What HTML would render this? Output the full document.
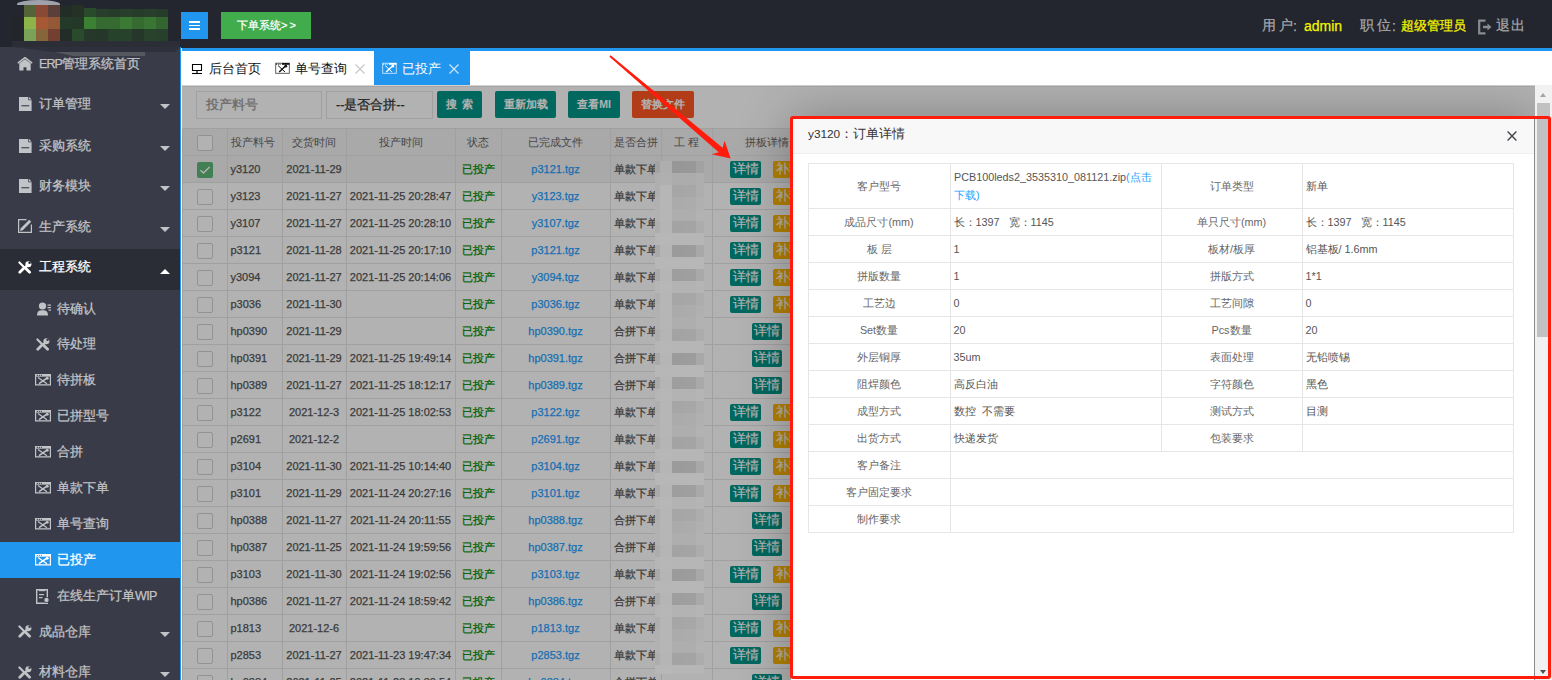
<!DOCTYPE html><html><head><meta charset="utf-8"><style>
*{box-sizing:border-box;margin:0;padding:0}
html,body{width:1552px;height:680px;overflow:hidden;background:#fff;font-family:"Liberation Sans",sans-serif;position:relative}
div,span,svg{position:absolute}
span.c,span.n{position:static}
.txt{white-space:nowrap;-webkit-text-stroke:0.25px currentColor}
</style></head><body>
<div style="left:0;top:0;width:1552px;height:48px;background:#23262e"></div>
<div style="left:17px;top:0;width:43px;height:5px;background:#9fa2aa;border-radius:60% 60% 0 0/100% 100% 0 0"></div>
<div style="left:12px;top:17px;width:12px;height:24px;background:#22262b"></div>
<div style="left:24px;top:5px;width:12px;height:12px;background:#546338"></div>
<div style="left:36px;top:5px;width:12px;height:12px;background:#8a4934"></div>
<div style="left:48px;top:5px;width:12px;height:12px;background:#5c3f38"></div>
<div style="left:60px;top:5px;width:12px;height:12px;background:#232d28"></div>
<div style="left:72px;top:5px;width:12px;height:12px;background:#243226"></div>
<div style="left:84px;top:8px;width:12px;height:9px;background:#2a4a2c"></div>
<div style="left:96px;top:9px;width:12px;height:8px;background:#28402b"></div>
<div style="left:108px;top:9px;width:12px;height:8px;background:#263c2a"></div>
<div style="left:120px;top:9px;width:12px;height:8px;background:#28402b"></div>
<div style="left:132px;top:9px;width:12px;height:8px;background:#263c2a"></div>
<div style="left:144px;top:9px;width:12px;height:8px;background:#28402b"></div>
<div style="left:156px;top:9px;width:12px;height:8px;background:#263c2a"></div>
<div style="left:24px;top:17px;width:12px;height:12px;background:#8db34b"></div>
<div style="left:36px;top:17px;width:12px;height:12px;background:#a65734"></div>
<div style="left:48px;top:17px;width:12px;height:12px;background:#955837"></div>
<div style="left:60px;top:17px;width:12px;height:12px;background:#243a29"></div>
<div style="left:72px;top:17px;width:12px;height:12px;background:#243827"></div>
<div style="left:84px;top:17px;width:12px;height:12px;background:#3c8133"></div>
<div style="left:96px;top:17px;width:12px;height:12px;background:#356a30"></div>
<div style="left:108px;top:17px;width:12px;height:12px;background:#356a30"></div>
<div style="left:120px;top:17px;width:12px;height:12px;background:#3b7a33"></div>
<div style="left:132px;top:17px;width:12px;height:12px;background:#356a31"></div>
<div style="left:144px;top:17px;width:12px;height:12px;background:#3a7633"></div>
<div style="left:156px;top:17px;width:12px;height:12px;background:#346530"></div>
<div style="left:24px;top:29px;width:12px;height:12px;background:#7aa357"></div>
<div style="left:36px;top:29px;width:12px;height:12px;background:#87643a"></div>
<div style="left:48px;top:29px;width:12px;height:12px;background:#733f30"></div>
<div style="left:60px;top:29px;width:12px;height:12px;background:#232d28"></div>
<div style="left:72px;top:29px;width:12px;height:12px;background:#2a4a2c"></div>
<div style="left:84px;top:29px;width:12px;height:12px;background:#26382a"></div>
<div style="left:96px;top:29px;width:12px;height:12px;background:#243728"></div>
<div style="left:108px;top:29px;width:12px;height:12px;background:#27422b"></div>
<div style="left:120px;top:29px;width:12px;height:12px;background:#27422b"></div>
<div style="left:132px;top:29px;width:12px;height:12px;background:#243728"></div>
<div style="left:144px;top:29px;width:12px;height:12px;background:#28432c"></div>
<div style="left:156px;top:29px;width:12px;height:12px;background:#26402b"></div>
<div style="left:12px;top:41px;width:168px;height:6px;background:#2b2e37"></div>
<div style="left:181px;top:12px;width:27px;height:27px;background:#2196ee"></div>
<div style="left:189px;top:21px;width:11px;height:1.6px;background:#fff"></div>
<div style="left:189px;top:24.5px;width:11px;height:1.6px;background:#fff"></div>
<div style="left:189px;top:28px;width:11px;height:1.6px;background:#fff"></div>
<div class="txt" style="left:221px;top:12px;width:90px;height:27px;background:#41ac4c;color:#fff;font-size:11px;line-height:27px;text-align:center;padding-left:1px"><span class="c" style="font-size:11.2px">下单系统</span>&gt;<span class="n" style="margin-left:2px">&gt;</span></div>
<div class="txt" style="left:1262px;top:18px;height:16px;line-height:16px;font-size:13.5px;color:#a6a7ab;letter-spacing:2.5px"><span class="c" style="font-size:13.5px">用户</span></div>
<div class="txt" style="left:1293px;top:18px;height:16px;line-height:16px;font-size:14px;color:#a6a7ab;letter-spacing:0px">:</div>
<div class="txt" style="left:1304px;top:18px;height:16px;line-height:16px;font-size:14px;color:#f5f500;letter-spacing:0px">admin</div>
<div class="txt" style="left:1360px;top:18px;height:16px;line-height:16px;font-size:13.5px;color:#a6a7ab;letter-spacing:3px"><span class="c" style="font-size:13.5px">职位</span></div>
<div class="txt" style="left:1392px;top:18px;height:16px;line-height:16px;font-size:14px;color:#a6a7ab;letter-spacing:0px">:</div>
<div class="txt" style="left:1401px;top:18px;height:16px;line-height:16px;font-size:13.5px;color:#f5f500;letter-spacing:0px"><span class="c" style="font-size:13px">超级管理员</span></div>
<svg style="left:1477px;top:18.5px" width="16" height="16" viewBox="0 0 16 16"><path d="M8.5 1.6H2.2v12.8H8.5" fill="none" stroke="#8a8b8f" stroke-width="2.2"/><path d="M6 8h6" stroke="#8a8b8f" stroke-width="2.5"/><path d="M10.5 4.5L14.5 8L10.5 11.5z" fill="#8a8b8f"/></svg>
<div class="txt" style="left:1496px;top:18px;height:16px;line-height:16px;font-size:13.5px;color:#a6a7ab;letter-spacing:0px"><span class="c" style="font-size:13.5px">退</span></div>
<div class="txt" style="left:1511px;top:18px;height:16px;line-height:16px;font-size:13.5px;color:#a6a7ab;letter-spacing:0px"><span class="c" style="font-size:13.5px">出</span></div>
<div style="left:0;top:47px;width:180px;height:633px;background:#393c48"></div>
<div style="left:12px;top:47px;width:168px;height:5px;background:#2e313b;clip-path:polygon(0 0,100% 0,97% 100%,25% 100%)"></div>
<div style="left:55px;top:52px;width:90px;height:4px;background:#55585f;clip-path:polygon(0 0,100% 0,100% 100%,20% 100%)"></div>
<div style="left:17px;top:57px;width:16px;height:16px"><svg width="16" height="14" viewBox="0 0 16 14"><path d="M0.8 6.2L8 0.6L15.2 6.2" fill="none" stroke="#c2c3c7" stroke-width="1.5"/><path d="M2.3 6.2L8 2.2L13.7 6.2V13.4H9.5V10.3H6.5V13.4H2.3Z" fill="#c2c3c7"/></svg></div>
<div class="txt" style="left:39px;top:56px;height:16px;line-height:16px;font-size:12.5px;color:#c2c3c7"><span class="n" style="letter-spacing:-0.9px">ERP</span><span class="c" style="font-size:12.5px">管理系统首页</span></div>
<div style="left:19px;top:97px;width:16px;height:16px"><svg width="13" height="14" viewBox="0 0 13 14"><path d="M0 0H9.3V3.2H12.6V14H0Z" fill="#c2c3c7"/><path d="M10 0L12.6 2.6H10Z" fill="#c2c3c7"/><rect x="2.4" y="8.2" width="7.8" height="1.1" fill="#393c48"/></svg></div>
<div class="txt" style="left:39px;top:96px;height:16px;line-height:16px;font-size:12.5px;color:#c2c3c7"><span class="c" style="font-size:12.5px">订单管理</span></div>
<div style="left:160px;top:104.4px;width:0;height:0;border-left:5.5px solid transparent;border-right:5.5px solid transparent;border-top:5.5px solid #c2c3c7"></div>
<div style="left:19px;top:138.5px;width:16px;height:16px"><svg width="13" height="14" viewBox="0 0 13 14"><path d="M0 0H9.3V3.2H12.6V14H0Z" fill="#c2c3c7"/><path d="M10 0L12.6 2.6H10Z" fill="#c2c3c7"/><rect x="2.4" y="8.2" width="7.8" height="1.1" fill="#393c48"/></svg></div>
<div class="txt" style="left:39px;top:137.5px;height:16px;line-height:16px;font-size:12.5px;color:#c2c3c7"><span class="c" style="font-size:12.5px">采购系统</span></div>
<div style="left:160px;top:145.9px;width:0;height:0;border-left:5.5px solid transparent;border-right:5.5px solid transparent;border-top:5.5px solid #c2c3c7"></div>
<div style="left:19px;top:179px;width:16px;height:16px"><svg width="13" height="14" viewBox="0 0 13 14"><path d="M0 0H9.3V3.2H12.6V14H0Z" fill="#c2c3c7"/><path d="M10 0L12.6 2.6H10Z" fill="#c2c3c7"/><rect x="2.4" y="8.2" width="7.8" height="1.1" fill="#393c48"/></svg></div>
<div class="txt" style="left:39px;top:178px;height:16px;line-height:16px;font-size:12.5px;color:#c2c3c7"><span class="c" style="font-size:12.5px">财务模块</span></div>
<div style="left:160px;top:186.4px;width:0;height:0;border-left:5.5px solid transparent;border-right:5.5px solid transparent;border-top:5.5px solid #c2c3c7"></div>
<div style="left:18px;top:219.0px;width:16px;height:16px"><svg width="14" height="14" viewBox="0 0 14 14"><path d="M8.5 0.6H0.6V13.4H13.4V5.5" fill="none" stroke="#c2c3c7" stroke-width="1.2"/><path d="M2 12L2.8 9.2L11.2 0.8L13.2 2.8L4.8 11.2Z" fill="#c2c3c7"/></svg></div>
<div class="txt" style="left:39px;top:218.5px;height:16px;line-height:16px;font-size:12.5px;color:#c2c3c7"><span class="c" style="font-size:12.5px">生产系统</span></div>
<div style="left:160px;top:226.9px;width:0;height:0;border-left:5.5px solid transparent;border-right:5.5px solid transparent;border-top:5.5px solid #c2c3c7"></div>
<div style="left:0;top:249px;width:180px;height:40.5px;background:#2a2d35"></div>
<div style="left:18px;top:260.5px;width:16px;height:16px"><svg width="14" height="13" viewBox="0 0 14 13"><path d="M1.4 1.4L6.2 6.2" stroke="#fff" stroke-width="2.1" stroke-linecap="round"/><path d="M6 7L1.8 11.2" stroke="#fff" stroke-width="2.8" stroke-linecap="round"/><path d="M6.8 6.4L11.6 11.2" stroke="#fff" stroke-width="2.8" stroke-linecap="round"/><circle cx="10.4" cy="3.2" r="3" fill="#fff"/><circle cx="11.6" cy="1.8" r="1.3" fill="#2a2d35"/><path d="M9.2 4.6L6.4 7.4" stroke="#fff" stroke-width="2.4"/></svg></div>
<div class="txt" style="left:39px;top:259px;height:16px;line-height:16px;font-size:12.5px;color:#fff"><span class="c" style="font-size:12.5px">工程系统</span></div>
<div style="left:160px;top:268.5px;width:0;height:0;border-left:5.5px solid transparent;border-right:5.5px solid transparent;border-bottom:5.5px solid #fff"></div>
<div style="left:37px;top:301.5px;width:16px;height:16px"><svg width="15" height="14" viewBox="0 0 15 14"><circle cx="5.5" cy="4" r="3.6" fill="#c2c3c7"/><path d="M0 13.6C0 9.3 2 8.2 5.5 8.2S11 9.3 11 13.6Z" fill="#c2c3c7"/><rect x="10.5" y="2.5" width="3.5" height="1.2" fill="#c2c3c7"/><rect x="10.5" y="5" width="3.5" height="1.2" fill="#c2c3c7"/><rect x="11.5" y="7.5" width="2.5" height="1.2" fill="#c2c3c7"/></svg></div>
<div class="txt" style="left:57px;top:300.5px;height:16px;line-height:16px;font-size:12.5px;color:#c2c3c7"><span class="c" style="font-size:12.5px">待确认</span></div>
<div style="left:36px;top:337.95px;width:16px;height:16px"><svg width="14" height="13" viewBox="0 0 14 13"><path d="M1.4 1.4L6.2 6.2" stroke="#c2c3c7" stroke-width="2.1" stroke-linecap="round"/><path d="M6 7L1.8 11.2" stroke="#c2c3c7" stroke-width="2.8" stroke-linecap="round"/><path d="M6.8 6.4L11.6 11.2" stroke="#c2c3c7" stroke-width="2.8" stroke-linecap="round"/><circle cx="10.4" cy="3.2" r="3" fill="#c2c3c7"/><circle cx="11.6" cy="1.8" r="1.3" fill="#393c48"/><path d="M9.2 4.6L6.4 7.4" stroke="#c2c3c7" stroke-width="2.4"/></svg></div>
<div class="txt" style="left:57px;top:336.45px;height:16px;line-height:16px;font-size:12.5px;color:#c2c3c7"><span class="c" style="font-size:12.5px">待处理</span></div>
<div style="left:35px;top:374.4px;width:16px;height:16px"><svg width="16" height="11.4" viewBox="0 0 16 12" preserveAspectRatio="none"><path d="M0.6 0.6H15.4V11.4H0.6Z" fill="none" stroke="#c2c3c7" stroke-width="1.2"/><rect x="0" y="0" width="16" height="2.8" fill="#c2c3c7"/><rect x="1.8" y="0.9" width="1.1" height="1.1" fill="#393c48"/><rect x="3.8" y="0.9" width="1.1" height="1.1" fill="#393c48"/><rect x="5.8" y="0.9" width="1.1" height="1.1" fill="#393c48"/><path d="M3 3.8L12 10.2" stroke="#c2c3c7" stroke-width="1.3"/><path d="M12.6 3.8L4 10.2" stroke="#c2c3c7" stroke-width="1.5"/><circle cx="12.2" cy="4.6" r="1.5" fill="#c2c3c7"/></svg></div>
<div class="txt" style="left:57px;top:372.4px;height:16px;line-height:16px;font-size:12.5px;color:#c2c3c7"><span class="c" style="font-size:12.5px">待拼板</span></div>
<div style="left:35px;top:410.35px;width:16px;height:16px"><svg width="16" height="11.4" viewBox="0 0 16 12" preserveAspectRatio="none"><path d="M0.6 0.6H15.4V11.4H0.6Z" fill="none" stroke="#c2c3c7" stroke-width="1.2"/><rect x="0" y="0" width="16" height="2.8" fill="#c2c3c7"/><rect x="1.8" y="0.9" width="1.1" height="1.1" fill="#393c48"/><rect x="3.8" y="0.9" width="1.1" height="1.1" fill="#393c48"/><rect x="5.8" y="0.9" width="1.1" height="1.1" fill="#393c48"/><path d="M3 3.8L12 10.2" stroke="#c2c3c7" stroke-width="1.3"/><path d="M12.6 3.8L4 10.2" stroke="#c2c3c7" stroke-width="1.5"/><circle cx="12.2" cy="4.6" r="1.5" fill="#c2c3c7"/></svg></div>
<div class="txt" style="left:57px;top:408.35px;height:16px;line-height:16px;font-size:12.5px;color:#c2c3c7"><span class="c" style="font-size:12.5px">已拼型号</span></div>
<div style="left:35px;top:446.3px;width:16px;height:16px"><svg width="16" height="11.4" viewBox="0 0 16 12" preserveAspectRatio="none"><path d="M0.6 0.6H15.4V11.4H0.6Z" fill="none" stroke="#c2c3c7" stroke-width="1.2"/><rect x="0" y="0" width="16" height="2.8" fill="#c2c3c7"/><rect x="1.8" y="0.9" width="1.1" height="1.1" fill="#393c48"/><rect x="3.8" y="0.9" width="1.1" height="1.1" fill="#393c48"/><rect x="5.8" y="0.9" width="1.1" height="1.1" fill="#393c48"/><path d="M3 3.8L12 10.2" stroke="#c2c3c7" stroke-width="1.3"/><path d="M12.6 3.8L4 10.2" stroke="#c2c3c7" stroke-width="1.5"/><circle cx="12.2" cy="4.6" r="1.5" fill="#c2c3c7"/></svg></div>
<div class="txt" style="left:57px;top:444.3px;height:16px;line-height:16px;font-size:12.5px;color:#c2c3c7"><span class="c" style="font-size:12.5px">合拼</span></div>
<div style="left:35px;top:482.25px;width:16px;height:16px"><svg width="16" height="11.4" viewBox="0 0 16 12" preserveAspectRatio="none"><path d="M0.6 0.6H15.4V11.4H0.6Z" fill="none" stroke="#c2c3c7" stroke-width="1.2"/><rect x="0" y="0" width="16" height="2.8" fill="#c2c3c7"/><rect x="1.8" y="0.9" width="1.1" height="1.1" fill="#393c48"/><rect x="3.8" y="0.9" width="1.1" height="1.1" fill="#393c48"/><rect x="5.8" y="0.9" width="1.1" height="1.1" fill="#393c48"/><path d="M3 3.8L12 10.2" stroke="#c2c3c7" stroke-width="1.3"/><path d="M12.6 3.8L4 10.2" stroke="#c2c3c7" stroke-width="1.5"/><circle cx="12.2" cy="4.6" r="1.5" fill="#c2c3c7"/></svg></div>
<div class="txt" style="left:57px;top:480.25px;height:16px;line-height:16px;font-size:12.5px;color:#c2c3c7"><span class="c" style="font-size:12.5px">单款下单</span></div>
<div style="left:35px;top:518.2px;width:16px;height:16px"><svg width="16" height="11.4" viewBox="0 0 16 12" preserveAspectRatio="none"><path d="M0.6 0.6H15.4V11.4H0.6Z" fill="none" stroke="#c2c3c7" stroke-width="1.2"/><rect x="0" y="0" width="16" height="2.8" fill="#c2c3c7"/><rect x="1.8" y="0.9" width="1.1" height="1.1" fill="#393c48"/><rect x="3.8" y="0.9" width="1.1" height="1.1" fill="#393c48"/><rect x="5.8" y="0.9" width="1.1" height="1.1" fill="#393c48"/><path d="M3 3.8L12 10.2" stroke="#c2c3c7" stroke-width="1.3"/><path d="M12.6 3.8L4 10.2" stroke="#c2c3c7" stroke-width="1.5"/><circle cx="12.2" cy="4.6" r="1.5" fill="#c2c3c7"/></svg></div>
<div class="txt" style="left:57px;top:516.2px;height:16px;line-height:16px;font-size:12.5px;color:#c2c3c7"><span class="c" style="font-size:12.5px">单号查询</span></div>
<div style="left:0;top:542px;width:180px;height:36px;background:#2196ee"></div>
<div style="left:35px;top:554.1500000000001px;width:16px;height:16px"><svg width="16" height="11.4" viewBox="0 0 16 12" preserveAspectRatio="none"><path d="M0.6 0.6H15.4V11.4H0.6Z" fill="none" stroke="#fff" stroke-width="1.2"/><rect x="0" y="0" width="16" height="2.8" fill="#fff"/><rect x="1.8" y="0.9" width="1.1" height="1.1" fill="#2196ee"/><rect x="3.8" y="0.9" width="1.1" height="1.1" fill="#2196ee"/><rect x="5.8" y="0.9" width="1.1" height="1.1" fill="#2196ee"/><path d="M3 3.8L12 10.2" stroke="#fff" stroke-width="1.3"/><path d="M12.6 3.8L4 10.2" stroke="#fff" stroke-width="1.5"/><circle cx="12.2" cy="4.6" r="1.5" fill="#fff"/></svg></div>
<div class="txt" style="left:57px;top:552.1500000000001px;height:16px;line-height:16px;font-size:12.5px;color:#fff"><span class="c" style="font-size:12.5px">已投产</span></div>
<div style="left:36px;top:589.1px;width:16px;height:16px"><svg width="15" height="15" viewBox="0 0 15 15"><path d="M0.7 0.7H11.3V14.3H0.7Z" fill="none" stroke="#c2c3c7" stroke-width="1.4"/><rect x="3" y="0" width="6" height="2.2" fill="#c2c3c7"/><rect x="3" y="5" width="5" height="1.2" fill="#c2c3c7"/><rect x="3" y="8" width="3.5" height="1.2" fill="#c2c3c7"/><circle cx="10.5" cy="11" r="3" fill="#393c48"/><circle cx="10.5" cy="11" r="2.2" fill="#c2c3c7"/></svg></div>
<div class="txt" style="left:57px;top:588.1px;height:16px;line-height:16px;font-size:12.5px;color:#c2c3c7"><span class="c" style="font-size:12.5px">在线生产订单</span><span class="n" style="letter-spacing:-0.6px">WIP</span></div>
<div style="left:18px;top:625.0px;width:16px;height:16px"><svg width="14" height="13" viewBox="0 0 14 13"><path d="M1.4 1.4L6.2 6.2" stroke="#c2c3c7" stroke-width="2.1" stroke-linecap="round"/><path d="M6 7L1.8 11.2" stroke="#c2c3c7" stroke-width="2.8" stroke-linecap="round"/><path d="M6.8 6.4L11.6 11.2" stroke="#c2c3c7" stroke-width="2.8" stroke-linecap="round"/><circle cx="10.4" cy="3.2" r="3" fill="#c2c3c7"/><circle cx="11.6" cy="1.8" r="1.3" fill="#393c48"/><path d="M9.2 4.6L6.4 7.4" stroke="#c2c3c7" stroke-width="2.4"/></svg></div>
<div class="txt" style="left:39px;top:623.5px;height:16px;line-height:16px;font-size:12.5px;color:#c2c3c7"><span class="c" style="font-size:12.5px">成品仓库</span></div>
<div style="left:160px;top:631.9px;width:0;height:0;border-left:5.5px solid transparent;border-right:5.5px solid transparent;border-top:5.5px solid #c2c3c7"></div>
<div style="left:18px;top:665.5px;width:16px;height:16px"><svg width="14" height="13" viewBox="0 0 14 13"><path d="M1.4 1.4L6.2 6.2" stroke="#c2c3c7" stroke-width="2.1" stroke-linecap="round"/><path d="M6 7L1.8 11.2" stroke="#c2c3c7" stroke-width="2.8" stroke-linecap="round"/><path d="M6.8 6.4L11.6 11.2" stroke="#c2c3c7" stroke-width="2.8" stroke-linecap="round"/><circle cx="10.4" cy="3.2" r="3" fill="#c2c3c7"/><circle cx="11.6" cy="1.8" r="1.3" fill="#393c48"/><path d="M9.2 4.6L6.4 7.4" stroke="#c2c3c7" stroke-width="2.4"/></svg></div>
<div class="txt" style="left:39px;top:664px;height:16px;line-height:16px;font-size:12.5px;color:#c2c3c7"><span class="c" style="font-size:12.5px">材料仓库</span></div>
<div style="left:160px;top:672.4px;width:0;height:0;border-left:5.5px solid transparent;border-right:5.5px solid transparent;border-top:5.5px solid #c2c3c7"></div>
<div style="left:180px;top:47px;width:1px;height:633px;background:#2196ee"></div>
<div style="left:182px;top:48px;width:1370px;height:3px;background:#2196ee"></div>
<div style="left:181px;top:51px;width:1371px;height:34px;background:#fff"></div>
<div style="left:374px;top:51px;width:96px;height:34px;background:#2196ee"></div>
<svg style="left:191px;top:63px" width="12" height="12" viewBox="0 0 12 12"><path d="M1.5 1.5H10.5V7.5H1.5Z" fill="none" stroke="#000" stroke-width="1.1"/><path d="M6 7.5V10" stroke="#000" stroke-width="1.2"/><path d="M1 10.5H11" stroke="#000" stroke-width="1.1"/></svg>
<div class="txt" style="left:209px;top:60.5px;height:16px;line-height:16px;font-size:13px;-webkit-text-stroke:0;color:#111"><span class="c" style="font-size:12.8px">后台首页</span></div>
<svg style="left:275px;top:62px" width="15" height="12" viewBox="0 0 15 12"><rect x="0.7" y="1.2" width="13.6" height="10.1" fill="none" stroke="#111" stroke-width="0.9" opacity="0.75"/><path d="M7 1H14.5V2.8H7Z" fill="#111"/><path d="M1 2.2H6.5" stroke="#111" stroke-width="1" stroke-dasharray="1 0.8"/><path d="M3 3.5L10 10" stroke="#111" stroke-width="1"/><path d="M4.2 10L10.2 4.2" stroke="#111" stroke-width="1.5"/><circle cx="10.8" cy="4.2" r="1.4" fill="#111"/></svg>
<div class="txt" style="left:295px;top:60.5px;height:16px;line-height:16px;font-size:13px;-webkit-text-stroke:0;color:#111"><span class="c" style="font-size:12.8px">单号查询</span></div>
<svg style="left:354.5px;top:64px" width="10" height="10" viewBox="0 0 10 10"><path d="M0.5 0.5L9.5 9.5M9.5 0.5L0.5 9.5" stroke="#c8c8c8" stroke-width="1.2"/></svg>
<svg style="left:382px;top:62px" width="15" height="12" viewBox="0 0 15 12"><rect x="0.7" y="1.2" width="13.6" height="10.1" fill="none" stroke="#fff" stroke-width="0.9" opacity="0.75"/><path d="M7 1H14.5V2.8H7Z" fill="#fff"/><path d="M1 2.2H6.5" stroke="#fff" stroke-width="1" stroke-dasharray="1 0.8"/><path d="M3 3.5L10 10" stroke="#fff" stroke-width="1"/><path d="M4.2 10L10.2 4.2" stroke="#fff" stroke-width="1.5"/><circle cx="10.8" cy="4.2" r="1.4" fill="#fff"/></svg>
<div class="txt" style="left:402px;top:60.5px;height:16px;line-height:16px;font-size:13px;-webkit-text-stroke:0;color:#fff"><span class="c" style="font-size:12.8px">已投产</span></div>
<svg style="left:449px;top:64px" width="10" height="10" viewBox="0 0 10 10"><path d="M0.5 0.5L9.5 9.5M9.5 0.5L0.5 9.5" stroke="#cfe6fb" stroke-width="1.2"/></svg>
<div style="left:182px;top:85px;width:1353px;height:595px;background:#fff"></div>
<div class="txt" style="left:196px;top:91px;width:126px;height:28px;border:1px solid #e6e6e6;background:#fff;color:#999;font-size:12.5px;line-height:26px;padding-left:9px"><span class="c" style="font-size:12.6px">投产料号</span></div>
<div class="txt" style="left:326px;top:91px;width:107px;height:28px;border:1px solid #e6e6e6;background:#fff;color:#333;font-size:12.5px;line-height:26px;padding-left:9px">--<span class="c" style="font-size:12.5px">是否合拼</span>--</div>
<div class="txt" style="left:437px;top:91px;width:45px;height:27px;background:#009688;border-radius:2px;color:#fff;font-size:10.5px;font-weight:bold;line-height:27px;text-align:center;-webkit-text-stroke:0"><span class="c" style="font-size:10.8px">搜</span>&nbsp;&nbsp;<span class="c" style="font-size:10.8px">索</span></div>
<div class="txt" style="left:495px;top:91px;width:61px;height:27px;background:#009688;border-radius:2px;color:#fff;font-size:10.5px;font-weight:bold;line-height:27px;text-align:center;-webkit-text-stroke:0"><span class="c" style="font-size:10.8px">重新加载</span></div>
<div class="txt" style="left:568px;top:91px;width:52px;height:27px;background:#009688;border-radius:2px;color:#fff;font-size:10.5px;font-weight:bold;line-height:27px;text-align:center;-webkit-text-stroke:0"><span class="c" style="font-size:10.8px">查看</span>MI</div>
<div class="txt" style="left:632px;top:91px;width:62px;height:27px;background:#FF5722;border-radius:2px;color:#fff;font-size:10.5px;font-weight:bold;line-height:27px;text-align:center;-webkit-text-stroke:0"><span class="c" style="font-size:10.8px">替换文件</span></div>
<div style="left:182px;top:128px;width:1353px;height:27px;background:#f2f2f2"></div>
<div style="left:182px;top:155px;width:1353px;height:27px;background:#f2f2f2"></div>
<div style="left:182px;top:128px;width:1353px;height:1px;background:#e6e6e6"></div>
<div style="left:182px;top:155px;width:1353px;height:1px;background:#e6e6e6"></div>
<div style="left:182px;top:182px;width:1353px;height:1px;background:#e6e6e6"></div>
<div style="left:182px;top:209px;width:1353px;height:1px;background:#e6e6e6"></div>
<div style="left:182px;top:236px;width:1353px;height:1px;background:#e6e6e6"></div>
<div style="left:182px;top:263px;width:1353px;height:1px;background:#e6e6e6"></div>
<div style="left:182px;top:290px;width:1353px;height:1px;background:#e6e6e6"></div>
<div style="left:182px;top:317px;width:1353px;height:1px;background:#e6e6e6"></div>
<div style="left:182px;top:344px;width:1353px;height:1px;background:#e6e6e6"></div>
<div style="left:182px;top:371px;width:1353px;height:1px;background:#e6e6e6"></div>
<div style="left:182px;top:398px;width:1353px;height:1px;background:#e6e6e6"></div>
<div style="left:182px;top:425px;width:1353px;height:1px;background:#e6e6e6"></div>
<div style="left:182px;top:452px;width:1353px;height:1px;background:#e6e6e6"></div>
<div style="left:182px;top:479px;width:1353px;height:1px;background:#e6e6e6"></div>
<div style="left:182px;top:506px;width:1353px;height:1px;background:#e6e6e6"></div>
<div style="left:182px;top:533px;width:1353px;height:1px;background:#e6e6e6"></div>
<div style="left:182px;top:560px;width:1353px;height:1px;background:#e6e6e6"></div>
<div style="left:182px;top:587px;width:1353px;height:1px;background:#e6e6e6"></div>
<div style="left:182px;top:614px;width:1353px;height:1px;background:#e6e6e6"></div>
<div style="left:182px;top:641px;width:1353px;height:1px;background:#e6e6e6"></div>
<div style="left:182px;top:668px;width:1353px;height:1px;background:#e6e6e6"></div>
<div style="left:182px;top:695px;width:1353px;height:1px;background:#e6e6e6"></div>
<div style="left:182px;top:128px;width:1px;height:552px;background:#e6e6e6"></div>
<div style="left:227px;top:128px;width:1px;height:552px;background:#e6e6e6"></div>
<div style="left:282px;top:128px;width:1px;height:552px;background:#e6e6e6"></div>
<div style="left:346px;top:128px;width:1px;height:552px;background:#e6e6e6"></div>
<div style="left:455px;top:128px;width:1px;height:552px;background:#e6e6e6"></div>
<div style="left:501px;top:128px;width:1px;height:552px;background:#e6e6e6"></div>
<div style="left:610px;top:128px;width:1px;height:552px;background:#e6e6e6"></div>
<div style="left:661px;top:128px;width:1px;height:552px;background:#e6e6e6"></div>
<div style="left:712px;top:128px;width:1px;height:552px;background:#e6e6e6"></div>
<div style="left:822px;top:128px;width:1px;height:552px;background:#e6e6e6"></div>
<div style="left:900px;top:128px;width:1px;height:552px;background:#e6e6e6"></div>
<div style="left:1000px;top:128px;width:1px;height:552px;background:#e6e6e6"></div>
<div style="left:1100px;top:128px;width:1px;height:552px;background:#e6e6e6"></div>
<div style="left:1200px;top:128px;width:1px;height:552px;background:#e6e6e6"></div>
<div style="left:1300px;top:128px;width:1px;height:552px;background:#e6e6e6"></div>
<div style="left:1400px;top:128px;width:1px;height:552px;background:#e6e6e6"></div>
<div style="left:197px;top:135px;width:16px;height:16px;border:1px solid #d2d2d2;border-radius:2px;background:#fff"></div>
<div class="txt" style="left:230.5px;top:133.5px;height:16px;line-height:16px;font-size:11px;color:#666;-webkit-text-stroke:0"><span class="c" style="font-size:11px">投产料号</span></div>
<div class="txt" style="left:282px;top:133.5px;width:64px;height:16px;line-height:16px;text-align:center;font-size:11px;color:#666;-webkit-text-stroke:0"><span class="c" style="font-size:11px">交货时间</span></div>
<div class="txt" style="left:346px;top:133.5px;width:109px;height:16px;line-height:16px;text-align:center;font-size:11px;color:#666;-webkit-text-stroke:0"><span class="c" style="font-size:11px">投产时间</span></div>
<div class="txt" style="left:455px;top:133.5px;width:46px;height:16px;line-height:16px;text-align:center;font-size:11px;color:#666;-webkit-text-stroke:0"><span class="c" style="font-size:11px">状态</span></div>
<div class="txt" style="left:501px;top:133.5px;width:109px;height:16px;line-height:16px;text-align:center;font-size:11px;color:#666;-webkit-text-stroke:0"><span class="c" style="font-size:11px">已完成文件</span></div>
<div class="txt" style="left:610px;top:133.5px;width:51px;height:16px;line-height:16px;text-align:center;font-size:11px;color:#666;-webkit-text-stroke:0"><span class="c" style="font-size:11px">是否合拼</span></div>
<div class="txt" style="left:661px;top:133.5px;width:51px;height:16px;line-height:16px;text-align:center;font-size:11px;color:#666;-webkit-text-stroke:0"><span class="c" style="font-size:11px">工</span>&nbsp;<span class="c" style="font-size:11px">程</span></div>
<div class="txt" style="left:712px;top:133.5px;width:110px;height:16px;line-height:16px;text-align:center;font-size:11px;color:#666;-webkit-text-stroke:0"><span class="c" style="font-size:11px">拼板详情</span></div>
<div style="left:197px;top:161.5px;width:16px;height:16px;border-radius:2px;background:#5FB878"></div>
<svg style="left:197px;top:161.5px" width="16" height="16" viewBox="0 0 16 16"><path d="M3.5 8.2L6.5 11L12.5 5" fill="none" stroke="#fff" stroke-width="1.5"/></svg>
<div class="txt" style="left:230.5px;top:161px;height:16px;line-height:16px;font-size:11px;color:#555;">y3120</div>
<div class="txt" style="left:282px;top:161px;width:64px;height:16px;line-height:16px;text-align:center;font-size:11px;color:#555;">2021-11-29</div>
<div class="txt" style="left:455px;top:161px;width:46px;height:16px;line-height:16px;text-align:center;font-size:11px;color:#008c00;"><span class="c" style="font-size:11px">已投产</span></div>
<div class="txt" style="left:501px;top:161px;width:109px;height:16px;line-height:16px;text-align:center;font-size:11px;color:#1E9FFF;">p3121.tgz</div>
<div style="left:614px;top:161px;width:42px;height:16px;overflow:hidden">
<div class="txt" style="left:0;top:0;height:16px;line-height:16px;font-size:11px;color:#555"><span class="c" style="font-size:11px">单款下单</span></div></div>
<div class="txt" style="left:730px;top:160.5px;width:31px;height:17px;background:#009688;border-radius:2px;color:#fff;font-size:12px;line-height:17px;text-align:center;-webkit-text-stroke:0.15px #fff"><span class="c" style="font-size:12.5px">详情</span></div>
<div class="txt" style="left:773px;top:160.5px;width:31px;height:17px;background:#FFB800;border-radius:2px;color:#fff;font-size:12px;line-height:17px;text-align:center;-webkit-text-stroke:0.15px #fff"><span class="c" style="font-size:12.5px">补料</span></div>
<div style="left:197px;top:188.5px;width:16px;height:16px;border:1px solid #d2d2d2;border-radius:2px;background:#fff"></div>
<div class="txt" style="left:230.5px;top:188px;height:16px;line-height:16px;font-size:11px;color:#555;">y3123</div>
<div class="txt" style="left:282px;top:188px;width:64px;height:16px;line-height:16px;text-align:center;font-size:11px;color:#555;">2021-11-27</div>
<div class="txt" style="left:346px;top:188px;width:109px;height:16px;line-height:16px;text-align:center;font-size:11px;color:#555;">2021-11-25 20:28:47</div>
<div class="txt" style="left:455px;top:188px;width:46px;height:16px;line-height:16px;text-align:center;font-size:11px;color:#008c00;"><span class="c" style="font-size:11px">已投产</span></div>
<div class="txt" style="left:501px;top:188px;width:109px;height:16px;line-height:16px;text-align:center;font-size:11px;color:#1E9FFF;">y3123.tgz</div>
<div style="left:614px;top:188px;width:42px;height:16px;overflow:hidden">
<div class="txt" style="left:0;top:0;height:16px;line-height:16px;font-size:11px;color:#555"><span class="c" style="font-size:11px">单款下单</span></div></div>
<div class="txt" style="left:730px;top:187.5px;width:31px;height:17px;background:#009688;border-radius:2px;color:#fff;font-size:12px;line-height:17px;text-align:center;-webkit-text-stroke:0.15px #fff"><span class="c" style="font-size:12.5px">详情</span></div>
<div class="txt" style="left:773px;top:187.5px;width:31px;height:17px;background:#FFB800;border-radius:2px;color:#fff;font-size:12px;line-height:17px;text-align:center;-webkit-text-stroke:0.15px #fff"><span class="c" style="font-size:12.5px">补料</span></div>
<div style="left:197px;top:215.5px;width:16px;height:16px;border:1px solid #d2d2d2;border-radius:2px;background:#fff"></div>
<div class="txt" style="left:230.5px;top:215px;height:16px;line-height:16px;font-size:11px;color:#555;">y3107</div>
<div class="txt" style="left:282px;top:215px;width:64px;height:16px;line-height:16px;text-align:center;font-size:11px;color:#555;">2021-11-27</div>
<div class="txt" style="left:346px;top:215px;width:109px;height:16px;line-height:16px;text-align:center;font-size:11px;color:#555;">2021-11-25 20:28:10</div>
<div class="txt" style="left:455px;top:215px;width:46px;height:16px;line-height:16px;text-align:center;font-size:11px;color:#008c00;"><span class="c" style="font-size:11px">已投产</span></div>
<div class="txt" style="left:501px;top:215px;width:109px;height:16px;line-height:16px;text-align:center;font-size:11px;color:#1E9FFF;">y3107.tgz</div>
<div style="left:614px;top:215px;width:42px;height:16px;overflow:hidden">
<div class="txt" style="left:0;top:0;height:16px;line-height:16px;font-size:11px;color:#555"><span class="c" style="font-size:11px">单款下单</span></div></div>
<div class="txt" style="left:730px;top:214.5px;width:31px;height:17px;background:#009688;border-radius:2px;color:#fff;font-size:12px;line-height:17px;text-align:center;-webkit-text-stroke:0.15px #fff"><span class="c" style="font-size:12.5px">详情</span></div>
<div class="txt" style="left:773px;top:214.5px;width:31px;height:17px;background:#FFB800;border-radius:2px;color:#fff;font-size:12px;line-height:17px;text-align:center;-webkit-text-stroke:0.15px #fff"><span class="c" style="font-size:12.5px">补料</span></div>
<div style="left:197px;top:242.5px;width:16px;height:16px;border:1px solid #d2d2d2;border-radius:2px;background:#fff"></div>
<div class="txt" style="left:230.5px;top:242px;height:16px;line-height:16px;font-size:11px;color:#555;">p3121</div>
<div class="txt" style="left:282px;top:242px;width:64px;height:16px;line-height:16px;text-align:center;font-size:11px;color:#555;">2021-11-28</div>
<div class="txt" style="left:346px;top:242px;width:109px;height:16px;line-height:16px;text-align:center;font-size:11px;color:#555;">2021-11-25 20:17:10</div>
<div class="txt" style="left:455px;top:242px;width:46px;height:16px;line-height:16px;text-align:center;font-size:11px;color:#008c00;"><span class="c" style="font-size:11px">已投产</span></div>
<div class="txt" style="left:501px;top:242px;width:109px;height:16px;line-height:16px;text-align:center;font-size:11px;color:#1E9FFF;">p3121.tgz</div>
<div style="left:614px;top:242px;width:42px;height:16px;overflow:hidden">
<div class="txt" style="left:0;top:0;height:16px;line-height:16px;font-size:11px;color:#555"><span class="c" style="font-size:11px">单款下单</span></div></div>
<div class="txt" style="left:730px;top:241.5px;width:31px;height:17px;background:#009688;border-radius:2px;color:#fff;font-size:12px;line-height:17px;text-align:center;-webkit-text-stroke:0.15px #fff"><span class="c" style="font-size:12.5px">详情</span></div>
<div class="txt" style="left:773px;top:241.5px;width:31px;height:17px;background:#FFB800;border-radius:2px;color:#fff;font-size:12px;line-height:17px;text-align:center;-webkit-text-stroke:0.15px #fff"><span class="c" style="font-size:12.5px">补料</span></div>
<div style="left:197px;top:269.5px;width:16px;height:16px;border:1px solid #d2d2d2;border-radius:2px;background:#fff"></div>
<div class="txt" style="left:230.5px;top:269px;height:16px;line-height:16px;font-size:11px;color:#555;">y3094</div>
<div class="txt" style="left:282px;top:269px;width:64px;height:16px;line-height:16px;text-align:center;font-size:11px;color:#555;">2021-11-27</div>
<div class="txt" style="left:346px;top:269px;width:109px;height:16px;line-height:16px;text-align:center;font-size:11px;color:#555;">2021-11-25 20:14:06</div>
<div class="txt" style="left:455px;top:269px;width:46px;height:16px;line-height:16px;text-align:center;font-size:11px;color:#008c00;"><span class="c" style="font-size:11px">已投产</span></div>
<div class="txt" style="left:501px;top:269px;width:109px;height:16px;line-height:16px;text-align:center;font-size:11px;color:#1E9FFF;">y3094.tgz</div>
<div style="left:614px;top:269px;width:42px;height:16px;overflow:hidden">
<div class="txt" style="left:0;top:0;height:16px;line-height:16px;font-size:11px;color:#555"><span class="c" style="font-size:11px">单款下单</span></div></div>
<div class="txt" style="left:730px;top:268.5px;width:31px;height:17px;background:#009688;border-radius:2px;color:#fff;font-size:12px;line-height:17px;text-align:center;-webkit-text-stroke:0.15px #fff"><span class="c" style="font-size:12.5px">详情</span></div>
<div class="txt" style="left:773px;top:268.5px;width:31px;height:17px;background:#FFB800;border-radius:2px;color:#fff;font-size:12px;line-height:17px;text-align:center;-webkit-text-stroke:0.15px #fff"><span class="c" style="font-size:12.5px">补料</span></div>
<div style="left:197px;top:296.5px;width:16px;height:16px;border:1px solid #d2d2d2;border-radius:2px;background:#fff"></div>
<div class="txt" style="left:230.5px;top:296px;height:16px;line-height:16px;font-size:11px;color:#555;">p3036</div>
<div class="txt" style="left:282px;top:296px;width:64px;height:16px;line-height:16px;text-align:center;font-size:11px;color:#555;">2021-11-30</div>
<div class="txt" style="left:455px;top:296px;width:46px;height:16px;line-height:16px;text-align:center;font-size:11px;color:#008c00;"><span class="c" style="font-size:11px">已投产</span></div>
<div class="txt" style="left:501px;top:296px;width:109px;height:16px;line-height:16px;text-align:center;font-size:11px;color:#1E9FFF;">p3036.tgz</div>
<div style="left:614px;top:296px;width:42px;height:16px;overflow:hidden">
<div class="txt" style="left:0;top:0;height:16px;line-height:16px;font-size:11px;color:#555"><span class="c" style="font-size:11px">单款下单</span></div></div>
<div class="txt" style="left:730px;top:295.5px;width:31px;height:17px;background:#009688;border-radius:2px;color:#fff;font-size:12px;line-height:17px;text-align:center;-webkit-text-stroke:0.15px #fff"><span class="c" style="font-size:12.5px">详情</span></div>
<div class="txt" style="left:773px;top:295.5px;width:31px;height:17px;background:#FFB800;border-radius:2px;color:#fff;font-size:12px;line-height:17px;text-align:center;-webkit-text-stroke:0.15px #fff"><span class="c" style="font-size:12.5px">补料</span></div>
<div style="left:197px;top:323.5px;width:16px;height:16px;border:1px solid #d2d2d2;border-radius:2px;background:#fff"></div>
<div class="txt" style="left:230.5px;top:323px;height:16px;line-height:16px;font-size:11px;color:#555;">hp0390</div>
<div class="txt" style="left:282px;top:323px;width:64px;height:16px;line-height:16px;text-align:center;font-size:11px;color:#555;">2021-11-29</div>
<div class="txt" style="left:455px;top:323px;width:46px;height:16px;line-height:16px;text-align:center;font-size:11px;color:#008c00;"><span class="c" style="font-size:11px">已投产</span></div>
<div class="txt" style="left:501px;top:323px;width:109px;height:16px;line-height:16px;text-align:center;font-size:11px;color:#1E9FFF;">hp0390.tgz</div>
<div style="left:614px;top:323px;width:42px;height:16px;overflow:hidden">
<div class="txt" style="left:0;top:0;height:16px;line-height:16px;font-size:11px;color:#555"><span class="c" style="font-size:11px">合拼下单</span></div></div>
<div class="txt" style="left:752px;top:322.5px;width:30px;height:17px;background:#009688;border-radius:2px;color:#fff;font-size:12px;line-height:17px;text-align:center;-webkit-text-stroke:0.15px #fff"><span class="c" style="font-size:12.5px">详情</span></div>
<div style="left:197px;top:350.5px;width:16px;height:16px;border:1px solid #d2d2d2;border-radius:2px;background:#fff"></div>
<div class="txt" style="left:230.5px;top:350px;height:16px;line-height:16px;font-size:11px;color:#555;">hp0391</div>
<div class="txt" style="left:282px;top:350px;width:64px;height:16px;line-height:16px;text-align:center;font-size:11px;color:#555;">2021-11-29</div>
<div class="txt" style="left:346px;top:350px;width:109px;height:16px;line-height:16px;text-align:center;font-size:11px;color:#555;">2021-11-25 19:49:14</div>
<div class="txt" style="left:455px;top:350px;width:46px;height:16px;line-height:16px;text-align:center;font-size:11px;color:#008c00;"><span class="c" style="font-size:11px">已投产</span></div>
<div class="txt" style="left:501px;top:350px;width:109px;height:16px;line-height:16px;text-align:center;font-size:11px;color:#1E9FFF;">hp0391.tgz</div>
<div style="left:614px;top:350px;width:42px;height:16px;overflow:hidden">
<div class="txt" style="left:0;top:0;height:16px;line-height:16px;font-size:11px;color:#555"><span class="c" style="font-size:11px">合拼下单</span></div></div>
<div class="txt" style="left:752px;top:349.5px;width:30px;height:17px;background:#009688;border-radius:2px;color:#fff;font-size:12px;line-height:17px;text-align:center;-webkit-text-stroke:0.15px #fff"><span class="c" style="font-size:12.5px">详情</span></div>
<div style="left:197px;top:377.5px;width:16px;height:16px;border:1px solid #d2d2d2;border-radius:2px;background:#fff"></div>
<div class="txt" style="left:230.5px;top:377px;height:16px;line-height:16px;font-size:11px;color:#555;">hp0389</div>
<div class="txt" style="left:282px;top:377px;width:64px;height:16px;line-height:16px;text-align:center;font-size:11px;color:#555;">2021-11-27</div>
<div class="txt" style="left:346px;top:377px;width:109px;height:16px;line-height:16px;text-align:center;font-size:11px;color:#555;">2021-11-25 18:12:17</div>
<div class="txt" style="left:455px;top:377px;width:46px;height:16px;line-height:16px;text-align:center;font-size:11px;color:#008c00;"><span class="c" style="font-size:11px">已投产</span></div>
<div class="txt" style="left:501px;top:377px;width:109px;height:16px;line-height:16px;text-align:center;font-size:11px;color:#1E9FFF;">hp0389.tgz</div>
<div style="left:614px;top:377px;width:42px;height:16px;overflow:hidden">
<div class="txt" style="left:0;top:0;height:16px;line-height:16px;font-size:11px;color:#555"><span class="c" style="font-size:11px">合拼下单</span></div></div>
<div class="txt" style="left:752px;top:376.5px;width:30px;height:17px;background:#009688;border-radius:2px;color:#fff;font-size:12px;line-height:17px;text-align:center;-webkit-text-stroke:0.15px #fff"><span class="c" style="font-size:12.5px">详情</span></div>
<div style="left:197px;top:404.5px;width:16px;height:16px;border:1px solid #d2d2d2;border-radius:2px;background:#fff"></div>
<div class="txt" style="left:230.5px;top:404px;height:16px;line-height:16px;font-size:11px;color:#555;">p3122</div>
<div class="txt" style="left:282px;top:404px;width:64px;height:16px;line-height:16px;text-align:center;font-size:11px;color:#555;">2021-12-3</div>
<div class="txt" style="left:346px;top:404px;width:109px;height:16px;line-height:16px;text-align:center;font-size:11px;color:#555;">2021-11-25 18:02:53</div>
<div class="txt" style="left:455px;top:404px;width:46px;height:16px;line-height:16px;text-align:center;font-size:11px;color:#008c00;"><span class="c" style="font-size:11px">已投产</span></div>
<div class="txt" style="left:501px;top:404px;width:109px;height:16px;line-height:16px;text-align:center;font-size:11px;color:#1E9FFF;">p3122.tgz</div>
<div style="left:614px;top:404px;width:42px;height:16px;overflow:hidden">
<div class="txt" style="left:0;top:0;height:16px;line-height:16px;font-size:11px;color:#555"><span class="c" style="font-size:11px">单款下单</span></div></div>
<div class="txt" style="left:730px;top:403.5px;width:31px;height:17px;background:#009688;border-radius:2px;color:#fff;font-size:12px;line-height:17px;text-align:center;-webkit-text-stroke:0.15px #fff"><span class="c" style="font-size:12.5px">详情</span></div>
<div class="txt" style="left:773px;top:403.5px;width:31px;height:17px;background:#FFB800;border-radius:2px;color:#fff;font-size:12px;line-height:17px;text-align:center;-webkit-text-stroke:0.15px #fff"><span class="c" style="font-size:12.5px">补料</span></div>
<div style="left:197px;top:431.5px;width:16px;height:16px;border:1px solid #d2d2d2;border-radius:2px;background:#fff"></div>
<div class="txt" style="left:230.5px;top:431px;height:16px;line-height:16px;font-size:11px;color:#555;">p2691</div>
<div class="txt" style="left:282px;top:431px;width:64px;height:16px;line-height:16px;text-align:center;font-size:11px;color:#555;">2021-12-2</div>
<div class="txt" style="left:455px;top:431px;width:46px;height:16px;line-height:16px;text-align:center;font-size:11px;color:#008c00;"><span class="c" style="font-size:11px">已投产</span></div>
<div class="txt" style="left:501px;top:431px;width:109px;height:16px;line-height:16px;text-align:center;font-size:11px;color:#1E9FFF;">p2691.tgz</div>
<div style="left:614px;top:431px;width:42px;height:16px;overflow:hidden">
<div class="txt" style="left:0;top:0;height:16px;line-height:16px;font-size:11px;color:#555"><span class="c" style="font-size:11px">单款下单</span></div></div>
<div class="txt" style="left:730px;top:430.5px;width:31px;height:17px;background:#009688;border-radius:2px;color:#fff;font-size:12px;line-height:17px;text-align:center;-webkit-text-stroke:0.15px #fff"><span class="c" style="font-size:12.5px">详情</span></div>
<div class="txt" style="left:773px;top:430.5px;width:31px;height:17px;background:#FFB800;border-radius:2px;color:#fff;font-size:12px;line-height:17px;text-align:center;-webkit-text-stroke:0.15px #fff"><span class="c" style="font-size:12.5px">补料</span></div>
<div style="left:197px;top:458.5px;width:16px;height:16px;border:1px solid #d2d2d2;border-radius:2px;background:#fff"></div>
<div class="txt" style="left:230.5px;top:458px;height:16px;line-height:16px;font-size:11px;color:#555;">p3104</div>
<div class="txt" style="left:282px;top:458px;width:64px;height:16px;line-height:16px;text-align:center;font-size:11px;color:#555;">2021-11-30</div>
<div class="txt" style="left:346px;top:458px;width:109px;height:16px;line-height:16px;text-align:center;font-size:11px;color:#555;">2021-11-25 10:14:40</div>
<div class="txt" style="left:455px;top:458px;width:46px;height:16px;line-height:16px;text-align:center;font-size:11px;color:#008c00;"><span class="c" style="font-size:11px">已投产</span></div>
<div class="txt" style="left:501px;top:458px;width:109px;height:16px;line-height:16px;text-align:center;font-size:11px;color:#1E9FFF;">p3104.tgz</div>
<div style="left:614px;top:458px;width:42px;height:16px;overflow:hidden">
<div class="txt" style="left:0;top:0;height:16px;line-height:16px;font-size:11px;color:#555"><span class="c" style="font-size:11px">单款下单</span></div></div>
<div class="txt" style="left:730px;top:457.5px;width:31px;height:17px;background:#009688;border-radius:2px;color:#fff;font-size:12px;line-height:17px;text-align:center;-webkit-text-stroke:0.15px #fff"><span class="c" style="font-size:12.5px">详情</span></div>
<div class="txt" style="left:773px;top:457.5px;width:31px;height:17px;background:#FFB800;border-radius:2px;color:#fff;font-size:12px;line-height:17px;text-align:center;-webkit-text-stroke:0.15px #fff"><span class="c" style="font-size:12.5px">补料</span></div>
<div style="left:197px;top:485.5px;width:16px;height:16px;border:1px solid #d2d2d2;border-radius:2px;background:#fff"></div>
<div class="txt" style="left:230.5px;top:485px;height:16px;line-height:16px;font-size:11px;color:#555;">p3101</div>
<div class="txt" style="left:282px;top:485px;width:64px;height:16px;line-height:16px;text-align:center;font-size:11px;color:#555;">2021-11-29</div>
<div class="txt" style="left:346px;top:485px;width:109px;height:16px;line-height:16px;text-align:center;font-size:11px;color:#555;">2021-11-24 20:27:16</div>
<div class="txt" style="left:455px;top:485px;width:46px;height:16px;line-height:16px;text-align:center;font-size:11px;color:#008c00;"><span class="c" style="font-size:11px">已投产</span></div>
<div class="txt" style="left:501px;top:485px;width:109px;height:16px;line-height:16px;text-align:center;font-size:11px;color:#1E9FFF;">p3101.tgz</div>
<div style="left:614px;top:485px;width:42px;height:16px;overflow:hidden">
<div class="txt" style="left:0;top:0;height:16px;line-height:16px;font-size:11px;color:#555"><span class="c" style="font-size:11px">单款下单</span></div></div>
<div class="txt" style="left:730px;top:484.5px;width:31px;height:17px;background:#009688;border-radius:2px;color:#fff;font-size:12px;line-height:17px;text-align:center;-webkit-text-stroke:0.15px #fff"><span class="c" style="font-size:12.5px">详情</span></div>
<div class="txt" style="left:773px;top:484.5px;width:31px;height:17px;background:#FFB800;border-radius:2px;color:#fff;font-size:12px;line-height:17px;text-align:center;-webkit-text-stroke:0.15px #fff"><span class="c" style="font-size:12.5px">补料</span></div>
<div style="left:197px;top:512.5px;width:16px;height:16px;border:1px solid #d2d2d2;border-radius:2px;background:#fff"></div>
<div class="txt" style="left:230.5px;top:512px;height:16px;line-height:16px;font-size:11px;color:#555;">hp0388</div>
<div class="txt" style="left:282px;top:512px;width:64px;height:16px;line-height:16px;text-align:center;font-size:11px;color:#555;">2021-11-27</div>
<div class="txt" style="left:346px;top:512px;width:109px;height:16px;line-height:16px;text-align:center;font-size:11px;color:#555;">2021-11-24 20:11:55</div>
<div class="txt" style="left:455px;top:512px;width:46px;height:16px;line-height:16px;text-align:center;font-size:11px;color:#008c00;"><span class="c" style="font-size:11px">已投产</span></div>
<div class="txt" style="left:501px;top:512px;width:109px;height:16px;line-height:16px;text-align:center;font-size:11px;color:#1E9FFF;">hp0388.tgz</div>
<div style="left:614px;top:512px;width:42px;height:16px;overflow:hidden">
<div class="txt" style="left:0;top:0;height:16px;line-height:16px;font-size:11px;color:#555"><span class="c" style="font-size:11px">合拼下单</span></div></div>
<div class="txt" style="left:752px;top:511.5px;width:30px;height:17px;background:#009688;border-radius:2px;color:#fff;font-size:12px;line-height:17px;text-align:center;-webkit-text-stroke:0.15px #fff"><span class="c" style="font-size:12.5px">详情</span></div>
<div style="left:197px;top:539.5px;width:16px;height:16px;border:1px solid #d2d2d2;border-radius:2px;background:#fff"></div>
<div class="txt" style="left:230.5px;top:539px;height:16px;line-height:16px;font-size:11px;color:#555;">hp0387</div>
<div class="txt" style="left:282px;top:539px;width:64px;height:16px;line-height:16px;text-align:center;font-size:11px;color:#555;">2021-11-25</div>
<div class="txt" style="left:346px;top:539px;width:109px;height:16px;line-height:16px;text-align:center;font-size:11px;color:#555;">2021-11-24 19:59:56</div>
<div class="txt" style="left:455px;top:539px;width:46px;height:16px;line-height:16px;text-align:center;font-size:11px;color:#008c00;"><span class="c" style="font-size:11px">已投产</span></div>
<div class="txt" style="left:501px;top:539px;width:109px;height:16px;line-height:16px;text-align:center;font-size:11px;color:#1E9FFF;">hp0387.tgz</div>
<div style="left:614px;top:539px;width:42px;height:16px;overflow:hidden">
<div class="txt" style="left:0;top:0;height:16px;line-height:16px;font-size:11px;color:#555"><span class="c" style="font-size:11px">合拼下单</span></div></div>
<div class="txt" style="left:752px;top:538.5px;width:30px;height:17px;background:#009688;border-radius:2px;color:#fff;font-size:12px;line-height:17px;text-align:center;-webkit-text-stroke:0.15px #fff"><span class="c" style="font-size:12.5px">详情</span></div>
<div style="left:197px;top:566.5px;width:16px;height:16px;border:1px solid #d2d2d2;border-radius:2px;background:#fff"></div>
<div class="txt" style="left:230.5px;top:566px;height:16px;line-height:16px;font-size:11px;color:#555;">p3103</div>
<div class="txt" style="left:282px;top:566px;width:64px;height:16px;line-height:16px;text-align:center;font-size:11px;color:#555;">2021-11-30</div>
<div class="txt" style="left:346px;top:566px;width:109px;height:16px;line-height:16px;text-align:center;font-size:11px;color:#555;">2021-11-24 19:02:56</div>
<div class="txt" style="left:455px;top:566px;width:46px;height:16px;line-height:16px;text-align:center;font-size:11px;color:#008c00;"><span class="c" style="font-size:11px">已投产</span></div>
<div class="txt" style="left:501px;top:566px;width:109px;height:16px;line-height:16px;text-align:center;font-size:11px;color:#1E9FFF;">p3103.tgz</div>
<div style="left:614px;top:566px;width:42px;height:16px;overflow:hidden">
<div class="txt" style="left:0;top:0;height:16px;line-height:16px;font-size:11px;color:#555"><span class="c" style="font-size:11px">单款下单</span></div></div>
<div class="txt" style="left:730px;top:565.5px;width:31px;height:17px;background:#009688;border-radius:2px;color:#fff;font-size:12px;line-height:17px;text-align:center;-webkit-text-stroke:0.15px #fff"><span class="c" style="font-size:12.5px">详情</span></div>
<div class="txt" style="left:773px;top:565.5px;width:31px;height:17px;background:#FFB800;border-radius:2px;color:#fff;font-size:12px;line-height:17px;text-align:center;-webkit-text-stroke:0.15px #fff"><span class="c" style="font-size:12.5px">补料</span></div>
<div style="left:197px;top:593.5px;width:16px;height:16px;border:1px solid #d2d2d2;border-radius:2px;background:#fff"></div>
<div class="txt" style="left:230.5px;top:593px;height:16px;line-height:16px;font-size:11px;color:#555;">hp0386</div>
<div class="txt" style="left:282px;top:593px;width:64px;height:16px;line-height:16px;text-align:center;font-size:11px;color:#555;">2021-11-27</div>
<div class="txt" style="left:346px;top:593px;width:109px;height:16px;line-height:16px;text-align:center;font-size:11px;color:#555;">2021-11-24 18:59:42</div>
<div class="txt" style="left:455px;top:593px;width:46px;height:16px;line-height:16px;text-align:center;font-size:11px;color:#008c00;"><span class="c" style="font-size:11px">已投产</span></div>
<div class="txt" style="left:501px;top:593px;width:109px;height:16px;line-height:16px;text-align:center;font-size:11px;color:#1E9FFF;">hp0386.tgz</div>
<div style="left:614px;top:593px;width:42px;height:16px;overflow:hidden">
<div class="txt" style="left:0;top:0;height:16px;line-height:16px;font-size:11px;color:#555"><span class="c" style="font-size:11px">合拼下单</span></div></div>
<div class="txt" style="left:752px;top:592.5px;width:30px;height:17px;background:#009688;border-radius:2px;color:#fff;font-size:12px;line-height:17px;text-align:center;-webkit-text-stroke:0.15px #fff"><span class="c" style="font-size:12.5px">详情</span></div>
<div style="left:197px;top:620.5px;width:16px;height:16px;border:1px solid #d2d2d2;border-radius:2px;background:#fff"></div>
<div class="txt" style="left:230.5px;top:620px;height:16px;line-height:16px;font-size:11px;color:#555;">p1813</div>
<div class="txt" style="left:282px;top:620px;width:64px;height:16px;line-height:16px;text-align:center;font-size:11px;color:#555;">2021-12-6</div>
<div class="txt" style="left:455px;top:620px;width:46px;height:16px;line-height:16px;text-align:center;font-size:11px;color:#008c00;"><span class="c" style="font-size:11px">已投产</span></div>
<div class="txt" style="left:501px;top:620px;width:109px;height:16px;line-height:16px;text-align:center;font-size:11px;color:#1E9FFF;">p1813.tgz</div>
<div style="left:614px;top:620px;width:42px;height:16px;overflow:hidden">
<div class="txt" style="left:0;top:0;height:16px;line-height:16px;font-size:11px;color:#555"><span class="c" style="font-size:11px">单款下单</span></div></div>
<div class="txt" style="left:730px;top:619.5px;width:31px;height:17px;background:#009688;border-radius:2px;color:#fff;font-size:12px;line-height:17px;text-align:center;-webkit-text-stroke:0.15px #fff"><span class="c" style="font-size:12.5px">详情</span></div>
<div class="txt" style="left:773px;top:619.5px;width:31px;height:17px;background:#FFB800;border-radius:2px;color:#fff;font-size:12px;line-height:17px;text-align:center;-webkit-text-stroke:0.15px #fff"><span class="c" style="font-size:12.5px">补料</span></div>
<div style="left:197px;top:647.5px;width:16px;height:16px;border:1px solid #d2d2d2;border-radius:2px;background:#fff"></div>
<div class="txt" style="left:230.5px;top:647px;height:16px;line-height:16px;font-size:11px;color:#555;">p2853</div>
<div class="txt" style="left:282px;top:647px;width:64px;height:16px;line-height:16px;text-align:center;font-size:11px;color:#555;">2021-11-27</div>
<div class="txt" style="left:346px;top:647px;width:109px;height:16px;line-height:16px;text-align:center;font-size:11px;color:#555;">2021-11-23 19:47:34</div>
<div class="txt" style="left:455px;top:647px;width:46px;height:16px;line-height:16px;text-align:center;font-size:11px;color:#008c00;"><span class="c" style="font-size:11px">已投产</span></div>
<div class="txt" style="left:501px;top:647px;width:109px;height:16px;line-height:16px;text-align:center;font-size:11px;color:#1E9FFF;">p2853.tgz</div>
<div style="left:614px;top:647px;width:42px;height:16px;overflow:hidden">
<div class="txt" style="left:0;top:0;height:16px;line-height:16px;font-size:11px;color:#555"><span class="c" style="font-size:11px">单款下单</span></div></div>
<div class="txt" style="left:730px;top:646.5px;width:31px;height:17px;background:#009688;border-radius:2px;color:#fff;font-size:12px;line-height:17px;text-align:center;-webkit-text-stroke:0.15px #fff"><span class="c" style="font-size:12.5px">详情</span></div>
<div class="txt" style="left:773px;top:646.5px;width:31px;height:17px;background:#FFB800;border-radius:2px;color:#fff;font-size:12px;line-height:17px;text-align:center;-webkit-text-stroke:0.15px #fff"><span class="c" style="font-size:12.5px">补料</span></div>
<div style="left:197px;top:674.5px;width:16px;height:16px;border:1px solid #d2d2d2;border-radius:2px;background:#fff"></div>
<div class="txt" style="left:230.5px;top:674px;height:16px;line-height:16px;font-size:11px;color:#555;">hp0384</div>
<div class="txt" style="left:282px;top:674px;width:64px;height:16px;line-height:16px;text-align:center;font-size:11px;color:#555;">2021-11-25</div>
<div class="txt" style="left:346px;top:674px;width:109px;height:16px;line-height:16px;text-align:center;font-size:11px;color:#555;">2021-11-23 19:30:54</div>
<div class="txt" style="left:455px;top:674px;width:46px;height:16px;line-height:16px;text-align:center;font-size:11px;color:#008c00;"><span class="c" style="font-size:11px">已投产</span></div>
<div class="txt" style="left:501px;top:674px;width:109px;height:16px;line-height:16px;text-align:center;font-size:11px;color:#1E9FFF;">hp0384.tgz</div>
<div style="left:614px;top:674px;width:42px;height:16px;overflow:hidden">
<div class="txt" style="left:0;top:0;height:16px;line-height:16px;font-size:11px;color:#555"><span class="c" style="font-size:11px">合拼下单</span></div></div>
<div class="txt" style="left:752px;top:673.5px;width:30px;height:17px;background:#009688;border-radius:2px;color:#fff;font-size:12px;line-height:17px;text-align:center;-webkit-text-stroke:0.15px #fff"><span class="c" style="font-size:12.5px">详情</span></div>
<div style="left:182px;top:86px;width:1353px;height:1px;background:#f0f0f0"></div>
<div style="left:182px;top:85px;width:1353px;height:595px;background:rgba(0,0,0,.3)"></div>
<div style="left:182px;top:85px;width:1353px;height:1px;background:#d2d2d2"></div>
<div style="left:655px;top:161px;width:5px;height:12px;background:rgb(163,163,163)"></div>
<div style="left:660px;top:161px;width:12px;height:12px;background:rgb(174,174,174)"></div>
<div style="left:672px;top:161px;width:12px;height:12px;background:rgb(151,151,151)"></div>
<div style="left:684px;top:161px;width:12px;height:12px;background:rgb(152,152,152)"></div>
<div style="left:696px;top:161px;width:8px;height:12px;background:rgb(162,162,162)"></div>
<div style="left:655px;top:173px;width:5px;height:12px;background:rgb(174,174,174)"></div>
<div style="left:660px;top:173px;width:12px;height:12px;background:rgb(176,176,176)"></div>
<div style="left:672px;top:173px;width:12px;height:12px;background:rgb(172,172,172)"></div>
<div style="left:684px;top:173px;width:12px;height:12px;background:rgb(172,172,172)"></div>
<div style="left:696px;top:173px;width:8px;height:12px;background:rgb(174,174,174)"></div>
<div style="left:655px;top:185px;width:5px;height:12px;background:rgb(174,174,174)"></div>
<div style="left:660px;top:185px;width:12px;height:12px;background:rgb(182,182,182)"></div>
<div style="left:672px;top:185px;width:12px;height:12px;background:rgb(166,166,166)"></div>
<div style="left:684px;top:185px;width:12px;height:12px;background:rgb(167,167,167)"></div>
<div style="left:696px;top:185px;width:8px;height:12px;background:rgb(173,173,173)"></div>
<div style="left:655px;top:197px;width:5px;height:12px;background:rgb(177,177,177)"></div>
<div style="left:660px;top:197px;width:12px;height:12px;background:rgb(182,182,182)"></div>
<div style="left:672px;top:197px;width:12px;height:12px;background:rgb(171,171,171)"></div>
<div style="left:684px;top:197px;width:12px;height:12px;background:rgb(172,172,172)"></div>
<div style="left:696px;top:197px;width:8px;height:12px;background:rgb(176,176,176)"></div>
<div style="left:655px;top:209px;width:5px;height:12px;background:rgb(178,178,178)"></div>
<div style="left:660px;top:209px;width:12px;height:12px;background:rgb(182,182,182)"></div>
<div style="left:672px;top:209px;width:12px;height:12px;background:rgb(174,174,174)"></div>
<div style="left:684px;top:209px;width:12px;height:12px;background:rgb(174,174,174)"></div>
<div style="left:696px;top:209px;width:8px;height:12px;background:rgb(178,178,178)"></div>
<div style="left:655px;top:221px;width:5px;height:12px;background:rgb(173,173,173)"></div>
<div style="left:660px;top:221px;width:12px;height:12px;background:rgb(181,181,181)"></div>
<div style="left:672px;top:221px;width:12px;height:12px;background:rgb(163,163,163)"></div>
<div style="left:684px;top:221px;width:12px;height:12px;background:rgb(164,164,164)"></div>
<div style="left:696px;top:221px;width:8px;height:12px;background:rgb(172,172,172)"></div>
<div style="left:655px;top:233px;width:5px;height:12px;background:rgb(182,182,182)"></div>
<div style="left:660px;top:233px;width:12px;height:12px;background:rgb(183,183,183)"></div>
<div style="left:672px;top:233px;width:12px;height:12px;background:rgb(182,182,182)"></div>
<div style="left:684px;top:233px;width:12px;height:12px;background:rgb(182,182,182)"></div>
<div style="left:696px;top:233px;width:8px;height:12px;background:rgb(182,182,182)"></div>
<div style="left:655px;top:245px;width:5px;height:12px;background:rgb(169,169,169)"></div>
<div style="left:660px;top:245px;width:12px;height:12px;background:rgb(181,181,181)"></div>
<div style="left:672px;top:245px;width:12px;height:12px;background:rgb(155,155,155)"></div>
<div style="left:684px;top:245px;width:12px;height:12px;background:rgb(156,156,156)"></div>
<div style="left:696px;top:245px;width:8px;height:12px;background:rgb(168,168,168)"></div>
<div style="left:655px;top:257px;width:5px;height:12px;background:rgb(183,183,183)"></div>
<div style="left:660px;top:257px;width:12px;height:12px;background:rgb(183,183,183)"></div>
<div style="left:672px;top:257px;width:12px;height:12px;background:rgb(183,183,183)"></div>
<div style="left:684px;top:257px;width:12px;height:12px;background:rgb(183,183,183)"></div>
<div style="left:696px;top:257px;width:8px;height:12px;background:rgb(183,183,183)"></div>
<div style="left:655px;top:269px;width:5px;height:12px;background:rgb(170,170,170)"></div>
<div style="left:660px;top:269px;width:12px;height:12px;background:rgb(181,181,181)"></div>
<div style="left:672px;top:269px;width:12px;height:12px;background:rgb(158,158,158)"></div>
<div style="left:684px;top:269px;width:12px;height:12px;background:rgb(159,159,159)"></div>
<div style="left:696px;top:269px;width:8px;height:12px;background:rgb(169,169,169)"></div>
<div style="left:655px;top:281px;width:5px;height:12px;background:rgb(181,181,181)"></div>
<div style="left:660px;top:281px;width:12px;height:12px;background:rgb(183,183,183)"></div>
<div style="left:672px;top:281px;width:12px;height:12px;background:rgb(179,179,179)"></div>
<div style="left:684px;top:281px;width:12px;height:12px;background:rgb(179,179,179)"></div>
<div style="left:696px;top:281px;width:8px;height:12px;background:rgb(181,181,181)"></div>
<div style="left:655px;top:293px;width:5px;height:12px;background:rgb(174,174,174)"></div>
<div style="left:660px;top:293px;width:12px;height:12px;background:rgb(182,182,182)"></div>
<div style="left:672px;top:293px;width:12px;height:12px;background:rgb(166,166,166)"></div>
<div style="left:684px;top:293px;width:12px;height:12px;background:rgb(167,167,167)"></div>
<div style="left:696px;top:293px;width:8px;height:12px;background:rgb(173,173,173)"></div>
<div style="left:655px;top:305px;width:5px;height:12px;background:rgb(177,177,177)"></div>
<div style="left:660px;top:305px;width:12px;height:12px;background:rgb(182,182,182)"></div>
<div style="left:672px;top:305px;width:12px;height:12px;background:rgb(171,171,171)"></div>
<div style="left:684px;top:305px;width:12px;height:12px;background:rgb(172,172,172)"></div>
<div style="left:696px;top:305px;width:8px;height:12px;background:rgb(176,176,176)"></div>
<div style="left:655px;top:317px;width:5px;height:12px;background:rgb(178,178,178)"></div>
<div style="left:660px;top:317px;width:12px;height:12px;background:rgb(182,182,182)"></div>
<div style="left:672px;top:317px;width:12px;height:12px;background:rgb(174,174,174)"></div>
<div style="left:684px;top:317px;width:12px;height:12px;background:rgb(174,174,174)"></div>
<div style="left:696px;top:317px;width:8px;height:12px;background:rgb(178,178,178)"></div>
<div style="left:655px;top:329px;width:5px;height:12px;background:rgb(173,173,173)"></div>
<div style="left:660px;top:329px;width:12px;height:12px;background:rgb(181,181,181)"></div>
<div style="left:672px;top:329px;width:12px;height:12px;background:rgb(163,163,163)"></div>
<div style="left:684px;top:329px;width:12px;height:12px;background:rgb(164,164,164)"></div>
<div style="left:696px;top:329px;width:8px;height:12px;background:rgb(172,172,172)"></div>
<div style="left:655px;top:341px;width:5px;height:12px;background:rgb(182,182,182)"></div>
<div style="left:660px;top:341px;width:12px;height:12px;background:rgb(183,183,183)"></div>
<div style="left:672px;top:341px;width:12px;height:12px;background:rgb(182,182,182)"></div>
<div style="left:684px;top:341px;width:12px;height:12px;background:rgb(182,182,182)"></div>
<div style="left:696px;top:341px;width:8px;height:12px;background:rgb(182,182,182)"></div>
<div style="left:655px;top:353px;width:5px;height:12px;background:rgb(169,169,169)"></div>
<div style="left:660px;top:353px;width:12px;height:12px;background:rgb(181,181,181)"></div>
<div style="left:672px;top:353px;width:12px;height:12px;background:rgb(155,155,155)"></div>
<div style="left:684px;top:353px;width:12px;height:12px;background:rgb(156,156,156)"></div>
<div style="left:696px;top:353px;width:8px;height:12px;background:rgb(168,168,168)"></div>
<div style="left:655px;top:365px;width:5px;height:12px;background:rgb(183,183,183)"></div>
<div style="left:660px;top:365px;width:12px;height:12px;background:rgb(183,183,183)"></div>
<div style="left:672px;top:365px;width:12px;height:12px;background:rgb(183,183,183)"></div>
<div style="left:684px;top:365px;width:12px;height:12px;background:rgb(183,183,183)"></div>
<div style="left:696px;top:365px;width:8px;height:12px;background:rgb(183,183,183)"></div>
<div style="left:655px;top:377px;width:5px;height:12px;background:rgb(170,170,170)"></div>
<div style="left:660px;top:377px;width:12px;height:12px;background:rgb(181,181,181)"></div>
<div style="left:672px;top:377px;width:12px;height:12px;background:rgb(158,158,158)"></div>
<div style="left:684px;top:377px;width:12px;height:12px;background:rgb(159,159,159)"></div>
<div style="left:696px;top:377px;width:8px;height:12px;background:rgb(169,169,169)"></div>
<div style="left:655px;top:389px;width:5px;height:12px;background:rgb(181,181,181)"></div>
<div style="left:660px;top:389px;width:12px;height:12px;background:rgb(183,183,183)"></div>
<div style="left:672px;top:389px;width:12px;height:12px;background:rgb(179,179,179)"></div>
<div style="left:684px;top:389px;width:12px;height:12px;background:rgb(179,179,179)"></div>
<div style="left:696px;top:389px;width:8px;height:12px;background:rgb(181,181,181)"></div>
<div style="left:655px;top:401px;width:5px;height:12px;background:rgb(174,174,174)"></div>
<div style="left:660px;top:401px;width:12px;height:12px;background:rgb(182,182,182)"></div>
<div style="left:672px;top:401px;width:12px;height:12px;background:rgb(166,166,166)"></div>
<div style="left:684px;top:401px;width:12px;height:12px;background:rgb(167,167,167)"></div>
<div style="left:696px;top:401px;width:8px;height:12px;background:rgb(173,173,173)"></div>
<div style="left:655px;top:413px;width:5px;height:12px;background:rgb(177,177,177)"></div>
<div style="left:660px;top:413px;width:12px;height:12px;background:rgb(182,182,182)"></div>
<div style="left:672px;top:413px;width:12px;height:12px;background:rgb(171,171,171)"></div>
<div style="left:684px;top:413px;width:12px;height:12px;background:rgb(172,172,172)"></div>
<div style="left:696px;top:413px;width:8px;height:12px;background:rgb(176,176,176)"></div>
<div style="left:655px;top:425px;width:5px;height:12px;background:rgb(178,178,178)"></div>
<div style="left:660px;top:425px;width:12px;height:12px;background:rgb(182,182,182)"></div>
<div style="left:672px;top:425px;width:12px;height:12px;background:rgb(174,174,174)"></div>
<div style="left:684px;top:425px;width:12px;height:12px;background:rgb(174,174,174)"></div>
<div style="left:696px;top:425px;width:8px;height:12px;background:rgb(178,178,178)"></div>
<div style="left:655px;top:437px;width:5px;height:12px;background:rgb(173,173,173)"></div>
<div style="left:660px;top:437px;width:12px;height:12px;background:rgb(181,181,181)"></div>
<div style="left:672px;top:437px;width:12px;height:12px;background:rgb(163,163,163)"></div>
<div style="left:684px;top:437px;width:12px;height:12px;background:rgb(164,164,164)"></div>
<div style="left:696px;top:437px;width:8px;height:12px;background:rgb(172,172,172)"></div>
<div style="left:655px;top:449px;width:5px;height:12px;background:rgb(182,182,182)"></div>
<div style="left:660px;top:449px;width:12px;height:12px;background:rgb(183,183,183)"></div>
<div style="left:672px;top:449px;width:12px;height:12px;background:rgb(182,182,182)"></div>
<div style="left:684px;top:449px;width:12px;height:12px;background:rgb(182,182,182)"></div>
<div style="left:696px;top:449px;width:8px;height:12px;background:rgb(182,182,182)"></div>
<div style="left:655px;top:461px;width:5px;height:12px;background:rgb(169,169,169)"></div>
<div style="left:660px;top:461px;width:12px;height:12px;background:rgb(181,181,181)"></div>
<div style="left:672px;top:461px;width:12px;height:12px;background:rgb(155,155,155)"></div>
<div style="left:684px;top:461px;width:12px;height:12px;background:rgb(156,156,156)"></div>
<div style="left:696px;top:461px;width:8px;height:12px;background:rgb(168,168,168)"></div>
<div style="left:655px;top:473px;width:5px;height:12px;background:rgb(183,183,183)"></div>
<div style="left:660px;top:473px;width:12px;height:12px;background:rgb(183,183,183)"></div>
<div style="left:672px;top:473px;width:12px;height:12px;background:rgb(183,183,183)"></div>
<div style="left:684px;top:473px;width:12px;height:12px;background:rgb(183,183,183)"></div>
<div style="left:696px;top:473px;width:8px;height:12px;background:rgb(183,183,183)"></div>
<div style="left:655px;top:485px;width:5px;height:12px;background:rgb(170,170,170)"></div>
<div style="left:660px;top:485px;width:12px;height:12px;background:rgb(181,181,181)"></div>
<div style="left:672px;top:485px;width:12px;height:12px;background:rgb(158,158,158)"></div>
<div style="left:684px;top:485px;width:12px;height:12px;background:rgb(159,159,159)"></div>
<div style="left:696px;top:485px;width:8px;height:12px;background:rgb(169,169,169)"></div>
<div style="left:655px;top:497px;width:5px;height:12px;background:rgb(181,181,181)"></div>
<div style="left:660px;top:497px;width:12px;height:12px;background:rgb(183,183,183)"></div>
<div style="left:672px;top:497px;width:12px;height:12px;background:rgb(179,179,179)"></div>
<div style="left:684px;top:497px;width:12px;height:12px;background:rgb(179,179,179)"></div>
<div style="left:696px;top:497px;width:8px;height:12px;background:rgb(181,181,181)"></div>
<div style="left:655px;top:509px;width:5px;height:12px;background:rgb(174,174,174)"></div>
<div style="left:660px;top:509px;width:12px;height:12px;background:rgb(182,182,182)"></div>
<div style="left:672px;top:509px;width:12px;height:12px;background:rgb(166,166,166)"></div>
<div style="left:684px;top:509px;width:12px;height:12px;background:rgb(167,167,167)"></div>
<div style="left:696px;top:509px;width:8px;height:12px;background:rgb(173,173,173)"></div>
<div style="left:655px;top:521px;width:5px;height:12px;background:rgb(177,177,177)"></div>
<div style="left:660px;top:521px;width:12px;height:12px;background:rgb(182,182,182)"></div>
<div style="left:672px;top:521px;width:12px;height:12px;background:rgb(171,171,171)"></div>
<div style="left:684px;top:521px;width:12px;height:12px;background:rgb(172,172,172)"></div>
<div style="left:696px;top:521px;width:8px;height:12px;background:rgb(176,176,176)"></div>
<div style="left:655px;top:533px;width:5px;height:12px;background:rgb(178,178,178)"></div>
<div style="left:660px;top:533px;width:12px;height:12px;background:rgb(182,182,182)"></div>
<div style="left:672px;top:533px;width:12px;height:12px;background:rgb(174,174,174)"></div>
<div style="left:684px;top:533px;width:12px;height:12px;background:rgb(174,174,174)"></div>
<div style="left:696px;top:533px;width:8px;height:12px;background:rgb(178,178,178)"></div>
<div style="left:655px;top:545px;width:5px;height:12px;background:rgb(173,173,173)"></div>
<div style="left:660px;top:545px;width:12px;height:12px;background:rgb(181,181,181)"></div>
<div style="left:672px;top:545px;width:12px;height:12px;background:rgb(163,163,163)"></div>
<div style="left:684px;top:545px;width:12px;height:12px;background:rgb(164,164,164)"></div>
<div style="left:696px;top:545px;width:8px;height:12px;background:rgb(172,172,172)"></div>
<div style="left:655px;top:557px;width:5px;height:12px;background:rgb(182,182,182)"></div>
<div style="left:660px;top:557px;width:12px;height:12px;background:rgb(183,183,183)"></div>
<div style="left:672px;top:557px;width:12px;height:12px;background:rgb(182,182,182)"></div>
<div style="left:684px;top:557px;width:12px;height:12px;background:rgb(182,182,182)"></div>
<div style="left:696px;top:557px;width:8px;height:12px;background:rgb(182,182,182)"></div>
<div style="left:655px;top:569px;width:5px;height:12px;background:rgb(169,169,169)"></div>
<div style="left:660px;top:569px;width:12px;height:12px;background:rgb(181,181,181)"></div>
<div style="left:672px;top:569px;width:12px;height:12px;background:rgb(155,155,155)"></div>
<div style="left:684px;top:569px;width:12px;height:12px;background:rgb(156,156,156)"></div>
<div style="left:696px;top:569px;width:8px;height:12px;background:rgb(168,168,168)"></div>
<div style="left:655px;top:581px;width:5px;height:12px;background:rgb(183,183,183)"></div>
<div style="left:660px;top:581px;width:12px;height:12px;background:rgb(183,183,183)"></div>
<div style="left:672px;top:581px;width:12px;height:12px;background:rgb(183,183,183)"></div>
<div style="left:684px;top:581px;width:12px;height:12px;background:rgb(183,183,183)"></div>
<div style="left:696px;top:581px;width:8px;height:12px;background:rgb(183,183,183)"></div>
<div style="left:655px;top:593px;width:5px;height:12px;background:rgb(170,170,170)"></div>
<div style="left:660px;top:593px;width:12px;height:12px;background:rgb(181,181,181)"></div>
<div style="left:672px;top:593px;width:12px;height:12px;background:rgb(158,158,158)"></div>
<div style="left:684px;top:593px;width:12px;height:12px;background:rgb(159,159,159)"></div>
<div style="left:696px;top:593px;width:8px;height:12px;background:rgb(169,169,169)"></div>
<div style="left:655px;top:605px;width:5px;height:12px;background:rgb(181,181,181)"></div>
<div style="left:660px;top:605px;width:12px;height:12px;background:rgb(183,183,183)"></div>
<div style="left:672px;top:605px;width:12px;height:12px;background:rgb(179,179,179)"></div>
<div style="left:684px;top:605px;width:12px;height:12px;background:rgb(179,179,179)"></div>
<div style="left:696px;top:605px;width:8px;height:12px;background:rgb(181,181,181)"></div>
<div style="left:655px;top:617px;width:5px;height:12px;background:rgb(174,174,174)"></div>
<div style="left:660px;top:617px;width:12px;height:12px;background:rgb(182,182,182)"></div>
<div style="left:672px;top:617px;width:12px;height:12px;background:rgb(166,166,166)"></div>
<div style="left:684px;top:617px;width:12px;height:12px;background:rgb(167,167,167)"></div>
<div style="left:696px;top:617px;width:8px;height:12px;background:rgb(173,173,173)"></div>
<div style="left:655px;top:629px;width:5px;height:12px;background:rgb(177,177,177)"></div>
<div style="left:660px;top:629px;width:12px;height:12px;background:rgb(182,182,182)"></div>
<div style="left:672px;top:629px;width:12px;height:12px;background:rgb(171,171,171)"></div>
<div style="left:684px;top:629px;width:12px;height:12px;background:rgb(172,172,172)"></div>
<div style="left:696px;top:629px;width:8px;height:12px;background:rgb(176,176,176)"></div>
<div style="left:655px;top:641px;width:5px;height:12px;background:rgb(178,178,178)"></div>
<div style="left:660px;top:641px;width:12px;height:12px;background:rgb(182,182,182)"></div>
<div style="left:672px;top:641px;width:12px;height:12px;background:rgb(174,174,174)"></div>
<div style="left:684px;top:641px;width:12px;height:12px;background:rgb(174,174,174)"></div>
<div style="left:696px;top:641px;width:8px;height:12px;background:rgb(178,178,178)"></div>
<div style="left:655px;top:653px;width:5px;height:12px;background:rgb(173,173,173)"></div>
<div style="left:660px;top:653px;width:12px;height:12px;background:rgb(181,181,181)"></div>
<div style="left:672px;top:653px;width:12px;height:12px;background:rgb(163,163,163)"></div>
<div style="left:684px;top:653px;width:12px;height:12px;background:rgb(164,164,164)"></div>
<div style="left:696px;top:653px;width:8px;height:12px;background:rgb(172,172,172)"></div>
<div style="left:655px;top:665px;width:5px;height:9px;background:rgb(182,182,182)"></div>
<div style="left:660px;top:665px;width:12px;height:9px;background:rgb(183,183,183)"></div>
<div style="left:672px;top:665px;width:12px;height:9px;background:rgb(182,182,182)"></div>
<div style="left:684px;top:665px;width:12px;height:9px;background:rgb(182,182,182)"></div>
<div style="left:696px;top:665px;width:8px;height:9px;background:rgb(182,182,182)"></div>
<div style="left:182px;top:85px;width:1353px;height:595px;overflow:hidden">
<div style="left:609px;top:32px;width:743px;height:600px;background:#fff;box-shadow:1px 1px 50px rgba(0,0,0,.3)"></div>
</div>
<div style="left:1535px;top:85px;width:17px;height:595px;background:#f1f1f1"></div>
<div style="left:1540px;top:93px;width:0;height:0;border-left:3.5px solid transparent;border-right:3.5px solid transparent;border-bottom:4px solid #a3a3a3"></div>
<div style="left:1537px;top:103px;width:13px;height:234px;background:#c1c1c1"></div>
<div style="left:1540px;top:670px;width:0;height:0;border-left:3.5px solid transparent;border-right:3.5px solid transparent;border-top:4px solid #505050"></div>
<div style="left:791px;top:117px;width:743px;height:37px;background:#f8f8f8;border-bottom:1px solid #eee"></div>
<div style="left:1534px;top:117px;width:1px;height:563px;background:#8a8a8a"></div>
<div class="txt" style="left:808px;top:125.5px;height:16px;line-height:16px;font-size:11.8px;-webkit-text-stroke:0;color:#333">y3120<span class="c" style="font-size:13px">：订单详情</span></div>
<svg style="left:1507px;top:130.5px" width="10" height="10" viewBox="0 0 10 10"><path d="M0.6 0.6L9.4 9.4M9.4 0.6L0.6 9.4" stroke="#44444c" stroke-width="1.4"/></svg>
<div style="left:808px;top:163px;width:706px;height:1px;background:#e6e6e6"></div>
<div style="left:808px;top:208px;width:706px;height:1px;background:#e6e6e6"></div>
<div style="left:808px;top:235px;width:706px;height:1px;background:#e6e6e6"></div>
<div style="left:808px;top:262px;width:706px;height:1px;background:#e6e6e6"></div>
<div style="left:808px;top:289px;width:706px;height:1px;background:#e6e6e6"></div>
<div style="left:808px;top:316px;width:706px;height:1px;background:#e6e6e6"></div>
<div style="left:808px;top:343px;width:706px;height:1px;background:#e6e6e6"></div>
<div style="left:808px;top:370px;width:706px;height:1px;background:#e6e6e6"></div>
<div style="left:808px;top:397px;width:706px;height:1px;background:#e6e6e6"></div>
<div style="left:808px;top:424px;width:706px;height:1px;background:#e6e6e6"></div>
<div style="left:808px;top:451px;width:706px;height:1px;background:#e6e6e6"></div>
<div style="left:808px;top:478px;width:706px;height:1px;background:#e6e6e6"></div>
<div style="left:808px;top:505px;width:706px;height:1px;background:#e6e6e6"></div>
<div style="left:808px;top:532px;width:706px;height:1px;background:#e6e6e6"></div>
<div style="left:808px;top:163px;width:1px;height:370px;background:#e6e6e6"></div>
<div style="left:1513px;top:163px;width:1px;height:370px;background:#e6e6e6"></div>
<div style="left:950px;top:163px;width:1px;height:370px;background:#e6e6e6"></div>
<div style="left:1161px;top:163px;width:1px;height:289px;background:#e6e6e6"></div>
<div style="left:1302px;top:163px;width:1px;height:289px;background:#e6e6e6"></div>
<div class="txt" style="left:808px;top:177.75px;width:142px;height:16px;line-height:16px;text-align:center;font-size:10.8px;-webkit-text-stroke:0;color:#666"><span class="c" style="font-size:11.4px">客户型号</span></div>
<div class="txt" style="left:954px;top:169.3px;height:16px;line-height:16px;font-size:10.8px;-webkit-text-stroke:0;color:#555">PCB100leds2_3535310_081121.zip<span class="n" style="color:#1E9FFF">(<span class="c" style="font-size:11.4px">点击</span></span></div>
<div class="txt" style="left:954px;top:186.8px;height:16px;line-height:16px;font-size:10.8px;-webkit-text-stroke:0;color:#1E9FFF"><span class="c" style="font-size:11.4px">下载</span>)</div>
<div class="txt" style="left:1161px;top:177.75px;width:141px;height:16px;line-height:16px;text-align:center;font-size:10.8px;-webkit-text-stroke:0;color:#666"><span class="c" style="font-size:11.4px">订单类型</span></div>
<div class="txt" style="left:1305.5px;top:177.75px;height:16px;line-height:16px;font-size:10.8px;-webkit-text-stroke:0;color:#555"><span class="c" style="font-size:11.4px">新单</span></div>
<div class="txt" style="left:808px;top:213.5px;width:142px;height:16px;line-height:16px;text-align:center;font-size:10.8px;-webkit-text-stroke:0;color:#666"><span class="c" style="font-size:11.4px">成品尺寸</span>(mm)</div>
<div class="txt" style="left:953.5px;top:213.5px;height:16px;line-height:16px;font-size:10.8px;-webkit-text-stroke:0;color:#555"><span class="c" style="font-size:11.4px">长：</span>1397&nbsp;&nbsp;&nbsp;<span class="c" style="font-size:11.4px">宽：</span>1145</div>
<div class="txt" style="left:1161px;top:213.5px;width:141px;height:16px;line-height:16px;text-align:center;font-size:10.8px;-webkit-text-stroke:0;color:#666"><span class="c" style="font-size:11.4px">单只尺寸</span>(mm)</div>
<div class="txt" style="left:1305.5px;top:213.5px;height:16px;line-height:16px;font-size:10.8px;-webkit-text-stroke:0;color:#555"><span class="c" style="font-size:11.4px">长：</span>1397&nbsp;&nbsp;&nbsp;<span class="c" style="font-size:11.4px">宽：</span>1145</div>
<div class="txt" style="left:808px;top:240.5px;width:142px;height:16px;line-height:16px;text-align:center;font-size:10.8px;-webkit-text-stroke:0;color:#666"><span class="c" style="font-size:11.4px">板</span>&nbsp;<span class="c" style="font-size:11.4px">层</span></div>
<div class="txt" style="left:953.5px;top:240.5px;height:16px;line-height:16px;font-size:10.8px;-webkit-text-stroke:0;color:#555">1</div>
<div class="txt" style="left:1161px;top:240.5px;width:141px;height:16px;line-height:16px;text-align:center;font-size:10.8px;-webkit-text-stroke:0;color:#666"><span class="c" style="font-size:11.4px">板材</span>/<span class="c" style="font-size:11.4px">板厚</span></div>
<div class="txt" style="left:1305.5px;top:240.5px;height:16px;line-height:16px;font-size:10.8px;-webkit-text-stroke:0;color:#555"><span class="c" style="font-size:11.4px">铝基板</span>/ 1.6mm</div>
<div class="txt" style="left:808px;top:267.5px;width:142px;height:16px;line-height:16px;text-align:center;font-size:10.8px;-webkit-text-stroke:0;color:#666"><span class="c" style="font-size:11.4px">拼版数量</span></div>
<div class="txt" style="left:953.5px;top:267.5px;height:16px;line-height:16px;font-size:10.8px;-webkit-text-stroke:0;color:#555">1</div>
<div class="txt" style="left:1161px;top:267.5px;width:141px;height:16px;line-height:16px;text-align:center;font-size:10.8px;-webkit-text-stroke:0;color:#666"><span class="c" style="font-size:11.4px">拼版方式</span></div>
<div class="txt" style="left:1305.5px;top:267.5px;height:16px;line-height:16px;font-size:10.8px;-webkit-text-stroke:0;color:#555">1*1</div>
<div class="txt" style="left:808px;top:294.5px;width:142px;height:16px;line-height:16px;text-align:center;font-size:10.8px;-webkit-text-stroke:0;color:#666"><span class="c" style="font-size:11.4px">工艺边</span></div>
<div class="txt" style="left:953.5px;top:294.5px;height:16px;line-height:16px;font-size:10.8px;-webkit-text-stroke:0;color:#555">0</div>
<div class="txt" style="left:1161px;top:294.5px;width:141px;height:16px;line-height:16px;text-align:center;font-size:10.8px;-webkit-text-stroke:0;color:#666"><span class="c" style="font-size:11.4px">工艺间隙</span></div>
<div class="txt" style="left:1305.5px;top:294.5px;height:16px;line-height:16px;font-size:10.8px;-webkit-text-stroke:0;color:#555">0</div>
<div class="txt" style="left:808px;top:321.5px;width:142px;height:16px;line-height:16px;text-align:center;font-size:10.8px;-webkit-text-stroke:0;color:#666">Set<span class="c" style="font-size:11.4px">数量</span></div>
<div class="txt" style="left:953.5px;top:321.5px;height:16px;line-height:16px;font-size:10.8px;-webkit-text-stroke:0;color:#555">20</div>
<div class="txt" style="left:1161px;top:321.5px;width:141px;height:16px;line-height:16px;text-align:center;font-size:10.8px;-webkit-text-stroke:0;color:#666">Pcs<span class="c" style="font-size:11.4px">数量</span></div>
<div class="txt" style="left:1305.5px;top:321.5px;height:16px;line-height:16px;font-size:10.8px;-webkit-text-stroke:0;color:#555">20</div>
<div class="txt" style="left:808px;top:348.5px;width:142px;height:16px;line-height:16px;text-align:center;font-size:10.8px;-webkit-text-stroke:0;color:#666"><span class="c" style="font-size:11.4px">外层铜厚</span></div>
<div class="txt" style="left:953.5px;top:348.5px;height:16px;line-height:16px;font-size:10.8px;-webkit-text-stroke:0;color:#555">35um</div>
<div class="txt" style="left:1161px;top:348.5px;width:141px;height:16px;line-height:16px;text-align:center;font-size:10.8px;-webkit-text-stroke:0;color:#666"><span class="c" style="font-size:11.4px">表面处理</span></div>
<div class="txt" style="left:1305.5px;top:348.5px;height:16px;line-height:16px;font-size:10.8px;-webkit-text-stroke:0;color:#555"><span class="c" style="font-size:11.4px">无铅喷锡</span></div>
<div class="txt" style="left:808px;top:375.5px;width:142px;height:16px;line-height:16px;text-align:center;font-size:10.8px;-webkit-text-stroke:0;color:#666"><span class="c" style="font-size:11.4px">阻焊颜色</span></div>
<div class="txt" style="left:953.5px;top:375.5px;height:16px;line-height:16px;font-size:10.8px;-webkit-text-stroke:0;color:#555"><span class="c" style="font-size:11.4px">高反白油</span></div>
<div class="txt" style="left:1161px;top:375.5px;width:141px;height:16px;line-height:16px;text-align:center;font-size:10.8px;-webkit-text-stroke:0;color:#666"><span class="c" style="font-size:11.4px">字符颜色</span></div>
<div class="txt" style="left:1305.5px;top:375.5px;height:16px;line-height:16px;font-size:10.8px;-webkit-text-stroke:0;color:#555"><span class="c" style="font-size:11.4px">黑色</span></div>
<div class="txt" style="left:808px;top:402.5px;width:142px;height:16px;line-height:16px;text-align:center;font-size:10.8px;-webkit-text-stroke:0;color:#666"><span class="c" style="font-size:11.4px">成型方式</span></div>
<div class="txt" style="left:953.5px;top:402.5px;height:16px;line-height:16px;font-size:10.8px;-webkit-text-stroke:0;color:#555"><span class="c" style="font-size:11.4px">数控</span>&nbsp;&nbsp;<span class="c" style="font-size:11.4px">不需要</span></div>
<div class="txt" style="left:1161px;top:402.5px;width:141px;height:16px;line-height:16px;text-align:center;font-size:10.8px;-webkit-text-stroke:0;color:#666"><span class="c" style="font-size:11.4px">测试方式</span></div>
<div class="txt" style="left:1305.5px;top:402.5px;height:16px;line-height:16px;font-size:10.8px;-webkit-text-stroke:0;color:#555"><span class="c" style="font-size:11.4px">目测</span></div>
<div class="txt" style="left:808px;top:429.5px;width:142px;height:16px;line-height:16px;text-align:center;font-size:10.8px;-webkit-text-stroke:0;color:#666"><span class="c" style="font-size:11.4px">出货方式</span></div>
<div class="txt" style="left:953.5px;top:429.5px;height:16px;line-height:16px;font-size:10.8px;-webkit-text-stroke:0;color:#555"><span class="c" style="font-size:11.4px">快递发货</span></div>
<div class="txt" style="left:1161px;top:429.5px;width:141px;height:16px;line-height:16px;text-align:center;font-size:10.8px;-webkit-text-stroke:0;color:#666"><span class="c" style="font-size:11.4px">包装要求</span></div>
<div class="txt" style="left:808px;top:456.5px;width:142px;height:16px;line-height:16px;text-align:center;font-size:10.8px;-webkit-text-stroke:0;color:#666"><span class="c" style="font-size:11.4px">客户备注</span></div>
<div class="txt" style="left:808px;top:483.5px;width:142px;height:16px;line-height:16px;text-align:center;font-size:10.8px;-webkit-text-stroke:0;color:#666"><span class="c" style="font-size:11.4px">客户固定要求</span></div>
<div class="txt" style="left:808px;top:510.5px;width:142px;height:16px;line-height:16px;text-align:center;font-size:10.8px;-webkit-text-stroke:0;color:#666"><span class="c" style="font-size:11.4px">制作要求</span></div>
<div style="left:790px;top:116px;width:761px;height:563px;border:3px solid #ff1c0d;border-radius:3px"></div>
<svg style="left:0;top:0" width="1552" height="680"><polygon points="609.4,56.8 718.7,152.3 711.8,154.3 730.6,158.4 724.6,140.8 722.6,147.7 610.6,55.2" fill="#ff1c0d"/></svg>
</body></html>
